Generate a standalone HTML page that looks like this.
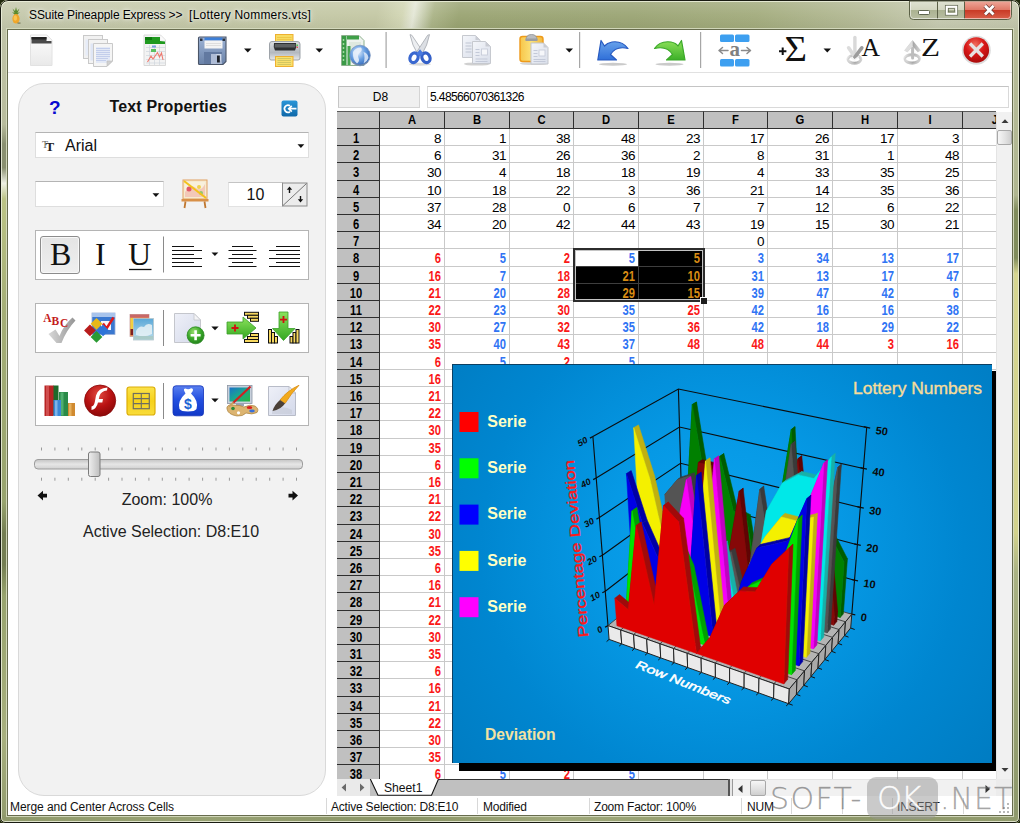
<!DOCTYPE html>
<html lang="en"><head><meta charset="utf-8"><title>SSuite Pineapple Express</title>
<style>
html,body{margin:0;padding:0}
body{width:1020px;height:823px;overflow:hidden;background:#20280e;position:relative;font-family:"Liberation Sans",sans-serif;font-size:12px;color:#000}
div,span{box-sizing:border-box}
.abs{position:absolute}
#win{position:absolute;left:0;top:0;width:1020px;height:823px;border-radius:8px 8px 5px 5px;background:#a0ab78;overflow:hidden}
#win .tb{position:absolute;left:0;top:0;width:1020px;height:30px;background:linear-gradient(100deg,#c4c8ab 0,#c3c7a3 37%,#d2d6b4 39.5%,#e4e7d6 40.6%,#aab386 42.5%,#99a371 45%,#9aa473 62%,#a2ab7c 74%,#b3b994 84%,#c6cab0 92%,#c2c6ab 100%)}
#win .tbsh{position:absolute;left:0;top:0;width:1020px;height:30px;background:linear-gradient(180deg,rgba(255,255,255,.18) 0,rgba(255,255,255,.05) 50%,rgba(0,0,0,.04) 100%)}
#win .edge{position:absolute;left:0;top:0;width:1020px;height:823px;border:1px solid #191b12;border-radius:8px 8px 5px 5px;box-shadow:inset 0 0 0 1px rgba(236,240,220,.85)}
#client{position:absolute;left:8px;top:30px;width:1004px;height:785px;background:#fff;box-shadow:0 0 0 1px #676c4e,0 0 0 2px rgba(214,219,192,.9)}
#title{position:absolute;left:29px;top:8px;font-size:12px;line-height:14px;white-space:pre;color:#000;text-shadow:0 0 6px rgba(255,255,255,.9),0 0 3px rgba(255,255,255,.8)}
/* grid */
#grid{position:absolute;left:0;top:0;width:1020px;height:823px}
#gridbg{position:absolute;left:337px;top:111px;width:675px;height:668px;background:#fff;overflow:hidden}
.ch{position:absolute;top:111px;height:18px;background:#c0c0c0;border-top:1px solid #5a5a5a;border-right:1px solid #2e2e2e;border-bottom:1px solid #2e2e2e;font:bold 12.500px/15px "Liberation Sans",sans-serif;text-align:center;overflow:hidden}
.ch span{display:block;position:relative;top:1px;transform:scaleX(.9)}
.rh{position:absolute;left:337px;width:43px;background:#c0c0c0;border-right:1px solid #2e2e2e;border-bottom:1px solid #2e2e2e;font:bold 14px/16px "Liberation Sans",sans-serif;text-align:center;overflow:hidden}
.rh span{display:block;position:relative;top:1px;left:-2px;transform:scaleX(.8)}
.hl{position:absolute;left:380px;width:616px;height:1px;background:#c9c9c9}
.vl{position:absolute;top:129px;width:1px;height:650px;background:#c9c9c9}
.c{position:absolute;text-align:right;padding-right:3px;padding-top:1px;white-space:nowrap;overflow:hidden}
.c.n{font:13.500px/17px "Liberation Sans",sans-serif;color:#000;letter-spacing:-.45px}
.c.b{font:bold 14px/17px "Liberation Sans",sans-serif;transform:scaleX(.8);transform-origin:calc(100% - 3px) 50%}
.rd{color:#fa1818}.bl{color:#3074f4}.o{color:#d88c14}
.selblk{position:absolute;background:#000;border:2px solid #2c2c2c;box-shadow:inset 0 0 0 1px #c4c4c4}
.selgl{position:absolute;background:#3e3e3e}
.actcell{position:absolute;background:#fff}
.selh{position:absolute;width:7px;height:7px;background:#1c1c1c;border-top:1px solid #fff;border-left:1px solid #fff}
/* misc */
.namebox{position:absolute;left:338px;top:86px;width:82px;height:22px;background:#f0f0f0;border:1px solid #d4d4d4;border-top-color:#bdbdbd;border-left-color:#c6c6c6;font:12px/20px "Liberation Sans",sans-serif;text-align:center;padding-left:3px}
.fbar{position:absolute;left:427px;top:86px;width:582px;height:22px;background:#fff;border:1px solid #d9d9d9;border-top-color:#c4c4c4;font:12px/20px "Liberation Sans",sans-serif;padding-left:2px;letter-spacing:-.6px}
.vsb{position:absolute;left:996px;top:112px;width:16px;height:667px;background:#f1f1f1;border-left:1px solid #e4e4e4}
.vthumb{position:absolute;left:0;top:18px;width:15px;height:15px;border:1px solid #a8a8a8;border-radius:2px;background:linear-gradient(90deg,#f6f6f6,#e2e2e2 55%,#cfcfcf)}
.tabbar{position:absolute;left:337px;top:779px;width:396px;height:17px;background:#c0c0c0;overflow:hidden}
.tabnav{position:absolute;left:0;top:0;width:33px;height:17px;background:#eaeaea}
.tabsplit{position:absolute;left:391px;top:0;width:5px;height:17px;background:#e6e6e6;border-left:2px solid #555;border-right:1px solid #999}
.hsb{position:absolute;left:733px;top:779px;width:263px;height:17px;background:#f1f1f1;border-top:1px solid #e4e4e4}
.hthumb{position:absolute;left:17px;top:0;width:16px;height:16px;border:1px solid #a8a8a8;border-radius:2px;background:linear-gradient(180deg,#f6f6f6,#e2e2e2 55%,#cfcfcf)}
.sbcorner{position:absolute;left:996px;top:779px;width:16px;height:17px;background:#ececec}
.status{position:absolute;left:8px;top:796px;width:1004px;height:19px;background:#fff}
.status .st{position:absolute;top:4px;font:12px/14px "Liberation Sans",sans-serif;white-space:nowrap;letter-spacing:-.2px;color:#111}
.status .st.w{letter-spacing:-.07px}
.status i{position:absolute;top:2px;width:1px;height:16px;background:#d8d8d8}
.wm{position:absolute;left:770px;top:777px;width:250px;height:44px;font-family:"DejaVu Sans","Liberation Sans",sans-serif;font-weight:200;white-space:nowrap}
.wm span{position:absolute;font-size:30px;line-height:36px;top:4px}
.wm .w1{left:0;color:rgba(105,105,105,.6);letter-spacing:1.400px;-webkit-text-stroke:.3px rgba(105,105,105,.5)}
.wm .w2{left:97px;top:0;width:71px;height:42px;border-radius:9px;background:rgba(150,150,150,.5);color:rgba(255,255,255,.95);text-align:left;padding-left:10px;letter-spacing:-1.500px;line-height:43px;font-size:32px;-webkit-text-stroke:.4px rgba(255,255,255,.8)}
.wm .w3{left:170px;color:rgba(105,105,105,.55);letter-spacing:1px;-webkit-text-stroke:.3px rgba(105,105,105,.5)}
/* chart */
.chshadow{position:absolute;left:459px;top:371px;width:537px;height:400px;background:#000}
/* panel */
#panel{position:absolute;left:18px;top:83px;width:308px;height:713px;background:#f2f2f2;border:1px solid #d9d9d9;border-radius:26px}
#panel>*{position:absolute}
#panel>div,#panel>svg{margin-left:-19px;margin-top:-84px}
.pq{left:49px;top:97px;font:bold 19px/22px "Liberation Sans",sans-serif;color:#0808d0}
.ptitle{left:109.500px;top:96px;width:120px;font:bold 16px/22px "Liberation Sans",sans-serif;color:#111;white-space:nowrap;letter-spacing:.15px}
.combo{background:#fff;border:1px solid #dedede;border-top-color:#b4b4b4}
.fname{position:absolute;left:29px;top:3px;font:16px/20px "Liberation Sans",sans-serif;color:#111}
.sizebox{left:228px;top:182px;width:55px;height:25px;background:#fff;border:1px solid #e2e2e2;border-top-color:#c4c4c4;font:16px/23px "Liberation Sans",sans-serif;text-align:center;color:#111}
.tbox{left:35px;width:274px;height:50px;background:#fff;border:1px solid #b4b4b4}
.bbtn{left:40px;top:236px;width:40px;height:38px;border:1px solid #8c8c8c;border-radius:3px;background:linear-gradient(180deg,#e4e4e4,#efefef);box-shadow:inset 0 0 0 1px #f8f8f8}
.pB,.pI,.pU{font:32px/36px "Liberation Serif",serif;color:#111;top:236px}
.pB{left:50px}
.pI{left:95px}
.pU{left:128px}
.zoomlbl{left:67px;top:489.500px;width:200px;text-align:center;font:16px/20px "Liberation Sans",sans-serif;color:#222}
.actsel{left:67px;top:522px;width:208px;text-align:center;font:16px/20px "Liberation Sans",sans-serif;color:#222;white-space:nowrap}
/* frame sides */
.lside{position:absolute;left:0;top:30px;width:8px;height:786px;background:linear-gradient(180deg,#c0c4a8 0,#b8bc9c 12%,#8a9070 14.500%,#8a9070 17.500%,#eef0e4 19.500%,#bcc486 21.500%,#a4ae76 36%,#98a46e 60%,#747e52 64%,#747e52 68%,#98a46e 72%,#a8b07e 90%,#929c6e 100%)}
.rside{position:absolute;left:1012px;top:30px;width:8px;height:786px;background:linear-gradient(180deg,#b8bd9a 0,#b0b690 21%,#818c5c 23%,#818c5c 29%,#d6d690 31%,#d2d28c 64%,#aab284 69%,#98a272 85%,#8e986c 100%)}
.bside{position:absolute;left:0;top:815px;width:1020px;height:8px;background:linear-gradient(90deg,#8f996b,#98a274 20%,#8a9466 40%,#a0a97c 55%,#8c9668 75%,#929c6e)}

</style></head>
<body>
<div id="win">
<div class="tb"></div><div class="tbsh"></div>
<div class="lside"></div><div class="rside"></div><div class="bside"></div>
<div class="edge"></div>
<svg class="abs" style="left:11px;top:7px" width="10" height="17" viewBox="0 0 10 17"><path d="M5 0 L4 4 L1.5 1.5 L3.5 6 L1 5 L4 8 L6 8 L9 5 L6.5 6 L8.5 1.500 L6 4 Z" fill="#5c8a2c"/><ellipse cx="5" cy="11.800" rx="3.600" ry="4.800" fill="#f0a62a"/><ellipse cx="4.300" cy="11" rx="1.800" ry="2.800" fill="#f8c552"/><rect x="6.500" y="15.500" width="3" height="1.200" fill="#7a7a58"/></svg>
<div id="title"><span style="letter-spacing:-.1px">SSuite Pineapple Express &gt;&gt;</span>  <span style="letter-spacing:.22px">[Lottery Nommers.vts]</span></div>
<svg id="capbtns" class="abs" style="left:905px;top:0" width="112" height="24" viewBox="905 0 112 24">
<defs>
<linearGradient id="cbG" x1="0" y1="0" x2="0" y2="1"><stop offset="0" stop-color="#dfe2d2"/><stop offset=".48" stop-color="#d2d6c0"/><stop offset=".5" stop-color="#abb291"/><stop offset="1" stop-color="#b9bfa3"/></linearGradient>
<linearGradient id="cbR" x1="0" y1="0" x2="0" y2="1"><stop offset="0" stop-color="#eda597"/><stop offset=".46" stop-color="#e07a68"/><stop offset=".5" stop-color="#c93a26"/><stop offset="1" stop-color="#d9604a"/></linearGradient>
</defs>
<path d="M909.500 1 L1011.500 1 L1011.500 15.500 Q1011.500 19.500 1007.500 19.500 L913.500 19.500 Q909.500 19.500 909.500 15.500 Z" fill="url(#cbG)" stroke="#5b6046" stroke-width="1"/>
<path d="M964.500 1.500 L1011 1.500 L1011 15.500 Q1011 19 1007.500 19 L964.500 19 Z" fill="url(#cbR)"/>
<path d="M937.500 1.500 V19 M964.500 1.500 V19" stroke="#5b6046" stroke-width="1"/>
<path d="M910.500 2 V15.500 Q910.500 18.500 913.500 18.500 H1007.500 Q1010.500 18.500 1010.500 15.500 V2" fill="none" stroke="rgba(255,255,255,.55)" stroke-width="1"/>
<rect x="918.500" y="10.500" width="11" height="4" rx="1" fill="#fff" stroke="#5f6650" stroke-width="1"/>
<rect x="946.500" y="6.500" width="10" height="7.500" fill="none" stroke="#fff" stroke-width="2.200"/>
<rect x="945.300" y="5.300" width="12.400" height="9.900" fill="none" stroke="#5f6650" stroke-width=".7"/>
<rect x="948.600" y="8.600" width="5.800" height="3.300" fill="none" stroke="#5f6650" stroke-width=".7"/>
<path d="M985 5.800 L993.500 14.500 M993.500 5.800 L985 14.500" stroke="#6a3a34" stroke-width="4.200"/>
<path d="M985 5.800 L993.500 14.500 M993.500 5.800 L985 14.500" stroke="#fff" stroke-width="2.800"/>
</svg>
<div id="client"></div>
</div>
<svg id="toolbar" class="abs" style="left:8px;top:30px" width="1004" height="44" viewBox="8 30 1004 44">
<defs>
<linearGradient id="gPage" x1="0" y1="0" x2="0" y2="1"><stop offset="0" stop-color="#fdfdfd"/><stop offset="1" stop-color="#e9e9e9"/></linearGradient>
<linearGradient id="gPageB" x1="0" y1="0" x2="1" y2="1"><stop offset="0" stop-color="#f4f6fa"/><stop offset="1" stop-color="#d9deea"/></linearGradient>
<linearGradient id="gFl" x1="0" y1="0" x2="0" y2="1"><stop offset="0" stop-color="#9db3d6"/><stop offset="1" stop-color="#6a82a8"/></linearGradient>
<linearGradient id="gPr" x1="0" y1="0" x2="0" y2="1"><stop offset="0" stop-color="#dcdfe2"/><stop offset=".6" stop-color="#b4b9bf"/><stop offset="1" stop-color="#e8eaec"/></linearGradient>
<linearGradient id="gClip" x1="0" y1="0" x2="1" y2="0"><stop offset="0" stop-color="#f7c64a"/><stop offset=".5" stop-color="#fbe27a"/><stop offset="1" stop-color="#f2b63a"/></linearGradient>
<radialGradient id="gGlobe" cx=".4" cy=".35" r=".7"><stop offset="0" stop-color="#e6f0fc"/><stop offset=".5" stop-color="#6aa0e2"/><stop offset="1" stop-color="#2c62b4"/></radialGradient>
<radialGradient id="gRed" cx=".45" cy=".3" r=".8"><stop offset="0" stop-color="#f07060"/><stop offset=".45" stop-color="#d81818"/><stop offset="1" stop-color="#9c0808"/></radialGradient>
<linearGradient id="gUndo" x1="0" y1="0" x2="0" y2="1"><stop offset="0" stop-color="#6aa4ec"/><stop offset="1" stop-color="#2f6fd8"/></linearGradient>
<linearGradient id="gRedo" x1="0" y1="0" x2="0" y2="1"><stop offset="0" stop-color="#8de05a"/><stop offset="1" stop-color="#3cb028"/></linearGradient>
<linearGradient id="gSil" x1="0" y1="0" x2="1" y2="0"><stop offset="0" stop-color="#e6e6e6"/><stop offset=".55" stop-color="#a8a8a8"/><stop offset="1" stop-color="#d8d8d8"/></linearGradient>
</defs>
<rect x="8" y="72" width="1004" height="1" fill="#e1e1e1"/>
<!-- 1 new -->
<g>
<path d="M30.500 35 L47 35 L52 40 L52 65.500 L30.500 65.500 Z" fill="url(#gPage)" stroke="#e2e2e2" stroke-width="1"/>
<path d="M31.500 37 L46.500 37 L46.500 41 L51.500 41 L51.500 43.500 L31.500 43.500 Z" fill="#4a4a4a"/>
<path d="M31.500 37 L46.500 37 L46.500 39.500 L31.500 39.500 Z" fill="#222"/>
<path d="M47 35.500 L47 40 L51.500 40 Z" fill="#f4f4f4"/>
</g>
<!-- 2 docs -->
<g stroke="#c9c9c9" stroke-width="1">
<rect x="83.500" y="35.500" width="19" height="23" fill="#f1f1f1"/>
<rect x="85.500" y="39.500" width="14" height="16" fill="#e6ecf8" stroke="none"/>
<rect x="88.500" y="39.500" width="19" height="24" fill="#f3f3f3"/>
<rect x="90.500" y="43.500" width="14" height="17" fill="#dfe6f5" stroke="none"/>
<path d="M93.500 43.500 L112.500 43.500 L112.500 61 L107 66.500 L93.500 66.500 Z" fill="#f5f5f5"/>
<rect x="96" y="47" width="14" height="16" fill="#e3e9f6" stroke="none"/>
<path d="M107 66 L107 61 L112.500 61 Z" fill="#d0d0d0" stroke="#bdbdbd" stroke-width=".6"/>
</g>
<g stroke="#b4c3e6" stroke-width=".7"><path d="M96 48.500h14M96 50.500h14M96 52.500h14M96 54.500h14M96 56.500h14M96 58.500h12M96 60.500h10"/></g>
<!-- 3 sheet chart -->
<g>
<path d="M144 35 L160.500 35 L165.500 40 L165.500 65.500 L144 65.500 Z" fill="#f3f3f3" stroke="#d9d9d9" stroke-width="1"/>
<path d="M145 37 L160 37 L160 41 L165 41.500 L165 44 L145 44 Z" fill="#1f9a1f"/>
<path d="M145 37 L152 37 L152 40 L145 40 Z" fill="#0d7a0d"/>
<path d="M160.500 35.500 L160.500 40 L165 40 Z" fill="#fafafa"/>
<g stroke="#cfd5dd" stroke-width=".7"><path d="M146 47.500h19M146 51.500h19M146 55.500h19M146 59.500h19M146 63h19M149.500 45v20M154.500 45v20M159.500 45v20"/></g>
<rect x="151" y="49" width="5" height="3" fill="#58c060"/><rect x="152" y="45.500" width="4" height="2" fill="#7aa0e0"/>
<path d="M147.500 62 L151 56 L153 59 L157.500 52.500 L159.500 57 L161.500 53 L163 60" fill="none" stroke="#ee7a70" stroke-width="1.100"/>
</g>
<!-- 4 floppy -->
<g>
<path d="M199.500 37 L226 37 L226 61.500 L223 64.500 L199.500 64.500 Q198.500 64.500 198.500 63.500 L198.500 38 Q198.500 37 199.500 37 Z" fill="url(#gFl)" stroke="#4a5568" stroke-width="1.100"/>
<rect x="204.500" y="37.500" width="18" height="3" fill="#3d7fd8"/>
<rect x="204.500" y="40.500" width="18" height="8" fill="#f4f4f4"/>
<path d="M206 43.500h15M206 45.500h15" stroke="#d4d4d4" stroke-width=".7"/>
<rect x="200" y="38.500" width="2.500" height="2.500" fill="#2b3340"/><rect x="222.500" y="38.500" width="2.500" height="2.500" fill="#2b3340"/>
<rect x="204" y="52" width="18" height="12" fill="#6279a0"/>
<rect x="211" y="54" width="10.500" height="10" fill="#cfd9ea"/>
<path d="M211 54 L216 54 L221.500 62 L221.500 64 L211 64 Z" fill="#aebcd6"/>
<rect x="217" y="55.500" width="2.800" height="7" fill="#1c2028"/>
</g>
<path d="M244 48.500 L251.500 48.500 L247.750 52.500 Z" fill="#111"/>
<!-- 5 printer -->
<g>
<rect x="275.500" y="34.500" width="17.500" height="9" fill="#f7dc62" stroke="#eeb030" stroke-width="1"/>
<path d="M277 37.500h14.500M277 39.500h14.500" stroke="#edc240" stroke-width=".8"/>
<path d="M269.500 44 Q269.500 41.500 272 41.500 L297 41.500 Q300 41.500 300 44 L300 58 Q300 60 298 60 L271 60 Q269.500 60 269.500 58 Z" fill="url(#gPr)" stroke="#9ea3a9" stroke-width="1"/>
<path d="M274 43 L296 43 Q297 47 295 50.500 L275 50.500 Q273 47 274 43 Z" fill="#2d2f31"/>
<path d="M275 44 L295.500 44 Q295.800 46 295 47.500 L274.600 47.500 Z" fill="#5d6062"/>
<rect x="296.500" y="44.500" width="1.500" height="1.500" fill="#4bd04b"/><rect x="296.500" y="46.500" width="1.500" height="1.500" fill="#e05050"/>
<rect x="275.500" y="56.500" width="17.500" height="10" fill="#f9e06c" stroke="#eeb030" stroke-width="1"/>
<path d="M277.500 58.500h13.500M277.500 60.500h13.500M277.500 62.500h13.500M277.500 64.500h13.500" stroke="#c8c060" stroke-width=".8"/>
</g>
<path d="M315.500 48.500 L323 48.500 L319.250 52.500 Z" fill="#111"/>
<!-- 6 globe doc -->
<g>
<path d="M341.500 35.500 L359 35.500 L364 40.500 L364 65.500 L341.500 65.500 Z" fill="#eef3ee" stroke="#8db08d" stroke-width="1"/>
<rect x="342" y="36" width="4.500" height="29" fill="#3a9a46"/>
<path d="M343.500 39v22" stroke="#9fd8a0" stroke-width="1.500" stroke-dasharray="2 2"/>
<rect x="347" y="36" width="12" height="3.500" fill="#3fa048"/>
<rect x="349" y="42" width="12" height="10" fill="#dfe9df"/>
<rect x="347.500" y="46" width="3" height="19" fill="#46a650"/>
<circle cx="360" cy="55.500" r="10.300" fill="url(#gGlobe)" stroke="#7f99c0" stroke-width=".8"/>
<path d="M353 52 Q356 47 361 47.500 Q363 50 360 52.500 Q357 55 358.500 58 Q360 61 357 63.500 Q352.500 60 353 52 Z" fill="#e8f0fb" opacity=".9"/>
<path d="M363.500 52 Q368 53 368.500 58 Q367 62 363.500 63.500 Q365.500 58 363.500 52 Z" fill="#dfeaf9" opacity=".85"/>
<path d="M352 62 Q360 68 368 62" stroke="#8a8f98" stroke-width="1.200" fill="none" opacity=".6"/>
</g>
<rect x="385.500" y="32" width="1.200" height="36" fill="#a6a6a6"/>
<!-- 7 scissors -->
<g>
<ellipse cx="420" cy="64.300" rx="11" ry="1.500" fill="#c9c9c9" opacity=".7"/>
<path d="M410 34.600 L411.800 35.200 L422.800 51.500 L418.500 55.500 Q411.800 45 410 34.600 Z" fill="#eceef1" stroke="#a4a8ae" stroke-width=".8" stroke-linejoin="round"/>
<path d="M429.500 34.600 L427.700 35.200 L417 51.500 L421.300 55.500 Q427.800 45 429.500 34.600 Z" fill="#dcdfe4" stroke="#a4a8ae" stroke-width=".8" stroke-linejoin="round"/>
<ellipse cx="414" cy="57.800" rx="3.900" ry="5" transform="rotate(24 414 57.800)" fill="none" stroke="#3a68d0" stroke-width="3.200"/>
<ellipse cx="426" cy="57.800" rx="3.900" ry="5" transform="rotate(-24 426 57.800)" fill="none" stroke="#3460c8" stroke-width="3.200"/>
<path d="M416.500 53.500 L420 49.200 L423.500 53.500 L420 57 Z" fill="#4878de"/>
</g>
<!-- 8 copy -->
<g>
<ellipse cx="477" cy="64" rx="13" ry="1.600" fill="#c4c4c4" opacity=".8"/>
<path d="M462.500 35.500 L475.500 35.500 L480 40 L480 57.500 L462.500 57.500 Z" fill="url(#gPageB)" stroke="#c6c9cf" stroke-width="1"/>
<path d="M475.500 35.500 L475.500 40 L480 40 Z" fill="#c9ccd4"/>
<path d="M465.500 43h6M465.500 46h6M465.500 49h6M465.500 52h6" stroke="#bfc5d2" stroke-width="1"/>
<path d="M472.500 41.500 L485.500 41.500 L490.500 46.500 L490.500 63.500 L472.500 63.500 Z" fill="url(#gPageB)" stroke="#c6c9cf" stroke-width="1"/>
<path d="M485.500 41.500 L485.500 46.500 L490.500 46.500 Z" fill="#c9ccd4"/>
<rect x="481.500" y="49" width="6" height="6" fill="#f6f7fa" stroke="#c4c9d6" stroke-width=".8"/>
<path d="M475.500 49.500h4M475.500 52.500h4M475.500 55.500h4M475.500 59h12M475.500 61.500h12" stroke="#c3c9d8" stroke-width="1"/>
</g>
<!-- 9 paste -->
<g>
<ellipse cx="534" cy="63.500" rx="14" ry="1.600" fill="#c4c4c4" opacity=".7"/>
<rect x="520" y="36.500" width="23" height="25" rx="2.500" fill="url(#gClip)" stroke="#ee9a1a" stroke-width="1.400"/>
<path d="M526 40 Q526 34.500 531.500 34.500 Q537 34.500 537 40 Z" fill="#b9bcc0" stroke="#8d9096" stroke-width=".8"/>
<rect x="525.500" y="38.500" width="12" height="2.500" fill="#9a9da2"/>
<path d="M531 43 L543.500 43 L548 47.500 L548 64 L531 64 Z" fill="url(#gPageB)" stroke="#c3c6cc" stroke-width="1"/>
<path d="M543.500 43 L543.500 47.500 L548 47.500 Z" fill="#c9ccd4"/>
<rect x="539" y="50" width="6" height="6" fill="#f6f7fa" stroke="#c4c9d6" stroke-width=".8"/>
<path d="M533.500 50.500h4M533.500 53.500h4M533.500 56.500h4M533.500 59.500h12M533.500 61.500h12" stroke="#c3c9d8" stroke-width="1"/>
</g>
<path d="M565.500 48.500 L573 48.500 L569.250 52.500 Z" fill="#111"/>
<rect x="579" y="32" width="1.200" height="36" fill="#a6a6a6"/>
<!-- 10 undo -->
<g>
<ellipse cx="613" cy="64.300" rx="14" ry="1.500" fill="#bdbdbd" opacity=".8"/>
<path d="M601 40.500 L597.800 60 L616.500 60 L610.500 54.500 Q616 45.500 628 48.500 Q622 40.500 612 42 Q607 43 604.500 46 Z" fill="url(#gUndo)" stroke="#2558c0" stroke-width="1.200" stroke-linejoin="round"/>
</g>
<!-- 11 redo -->
<g>
<ellipse cx="669.500" cy="64.300" rx="14" ry="1.500" fill="#bdbdbd" opacity=".8"/>
<path d="M681.500 40.500 L685 60 L666.500 60 L672.500 54.500 Q667 45.500 654.500 48.500 Q660 40.500 671 42 Q676 43 678 46 Z" fill="url(#gRedo)" stroke="#3aa828" stroke-width="1.200" stroke-linejoin="round"/>
</g>
<rect x="700" y="32" width="1.200" height="36" fill="#a6a6a6"/>
<!-- 12 merge -->
<g>
<rect x="720" y="34.500" width="14" height="7.500" rx="1.500" fill="#3d9ff0"/><rect x="735" y="34.500" width="14.500" height="7.500" rx="1.500" fill="#3d9ff0"/>
<rect x="720" y="59" width="14" height="7.500" rx="1.500" fill="#3d9ff0"/><rect x="735" y="59" width="14.500" height="7.500" rx="1.500" fill="#3d9ff0"/>
<text x="734.800" y="55.500" text-anchor="middle" font-family="Liberation Serif, serif" font-weight="bold" font-size="21" fill="#808080">a</text>
<path d="M719 50.500h9M719 50.500l3.500-3M719 50.500l3.500 3M750.500 50.500h-9M750.500 50.500l-3.500-3M750.500 50.500l-3.500 3" stroke="#8a8a8a" stroke-width="1.500" fill="none" stroke-linecap="round"/>
</g>
<!-- 13 sum -->
<text x="784.500" y="61.200" font-family="Liberation Serif, serif" font-size="35" fill="#111" textLength="22.500" lengthAdjust="spacingAndGlyphs">Σ</text>
<path d="M779 51.200h7.400M782.700 47.500v7.400" stroke="#111" stroke-width="2"/>
<path d="M823.500 48.500 L831 48.500 L827.250 52.500 Z" fill="#111"/>
<!-- 14 sort A -->
<g>
<ellipse cx="854.400" cy="59.300" rx="6.600" ry="3.900" fill="none" stroke="url(#gSil)" stroke-width="2.800"/>
<ellipse cx="854.400" cy="60.300" rx="6.600" ry="3.900" fill="none" stroke="#c8c8c8" stroke-width="1.200" opacity=".7"/>
<path d="M854.900 37.500 V56" stroke="#d9d9d9" stroke-width="3.400" stroke-linecap="round"/>
<path d="M848.600 47.800 L854.900 57" stroke="#dcdcdc" stroke-width="3.600" stroke-linecap="round"/>
<path d="M861.800 47.800 L854.900 57" stroke="#9c9c9c" stroke-width="3.600" stroke-linecap="round"/>
<path d="M850.500 57.500 L854.500 60 L859 56.500" stroke="#f4f4f4" stroke-width="1.400" fill="none"/>
<text x="861.500" y="55.500" font-family="Liberation Serif, serif" font-size="25" fill="#111" textLength="18.500" lengthAdjust="spacingAndGlyphs">A</text>
</g>
<!-- 15 sort Z -->
<g>
<ellipse cx="912.100" cy="58.800" rx="7.400" ry="4.200" fill="none" stroke="url(#gSil)" stroke-width="2.800"/>
<ellipse cx="912.100" cy="59.800" rx="7.400" ry="4.200" fill="none" stroke="#c8c8c8" stroke-width="1.200" opacity=".7"/>
<path d="M912.600 48 V58" stroke="#bdbdbd" stroke-width="3" stroke-linecap="round"/>
<path d="M912.600 40.200 L921 50.600 L917.800 52.200 L912.600 46.200 L907.400 52.200 L904.200 50.600 Z" fill="url(#gSil)"/>
<path d="M912.600 40.200 L904.200 50.600 L907.400 52.200 L912.600 46.200 Z" fill="#dedede"/>
<text x="921" y="56.300" font-family="Liberation Serif, serif" font-size="25.500" fill="#111" textLength="19" lengthAdjust="spacingAndGlyphs">Z</text>
</g>
<!-- 16 close -->
<g>
<circle cx="976.300" cy="50.300" r="14.500" fill="#dcdcdc"/>
<circle cx="976.300" cy="50" r="12.800" fill="url(#gRed)"/>
<path d="M970 43.500 L982.800 56.500 M982.800 43.500 L970 56.500" stroke="#e6e2e2" stroke-width="3.300" stroke-linecap="butt"/>
</g>
</svg>
<div id="panel">
<div class="pq">?</div>
<div class="ptitle">Text Properties</div>
<div class="combo" style="left:35px;top:132px;width:274px;height:26px"><span class="fname">Arial</span></div>
<div class="combo" style="left:35px;top:181px;width:129px;height:26px"></div>
<div class="sizebox">10</div>
<div class="tbox" style="top:230px"></div>
<div class="bbtn"></div>
<div class="tbox" style="top:303px"></div>
<div class="tbox" style="top:376px"></div>
<div class="pB">B</div><div class="pI">I</div><div class="pU">U</div>
<div class="zoomlbl">Zoom: 100%</div>
<div class="actsel">Active Selection: D8:E10</div>
<svg id="picons" class="abs" style="left:19px;top:84px" width="307" height="460" viewBox="19 84 307 460">
<defs>
<linearGradient id="pgBlue" x1="0" y1="0" x2="0" y2="1"><stop offset="0" stop-color="#2a96d8"/><stop offset="1" stop-color="#0f68a8"/></linearGradient>
<linearGradient id="pgGreen" x1="0" y1="0" x2="0" y2="1"><stop offset="0" stop-color="#8be25c"/><stop offset="1" stop-color="#35a822"/></linearGradient>
<radialGradient id="pgGreenC" cx=".4" cy=".3" r=".8"><stop offset="0" stop-color="#9ae070"/><stop offset=".5" stop-color="#3aa82a"/><stop offset="1" stop-color="#1f7a18"/></radialGradient>
<radialGradient id="pgFlash" cx=".45" cy=".3" r=".8"><stop offset="0" stop-color="#e04a40"/><stop offset=".5" stop-color="#b81212"/><stop offset="1" stop-color="#7c0606"/></radialGradient>
<linearGradient id="pgYel" x1="0" y1="0" x2="0" y2="1"><stop offset="0" stop-color="#fbe24a"/><stop offset=".5" stop-color="#f6d21c"/><stop offset="1" stop-color="#f9dc3a"/></linearGradient>
<linearGradient id="pgBag" x1="0" y1="0" x2="0" y2="1"><stop offset="0" stop-color="#5a80f0"/><stop offset=".45" stop-color="#2450e0"/><stop offset="1" stop-color="#1038c8"/></linearGradient>
<linearGradient id="pgScr" x1="0" y1="0" x2="1" y2="1"><stop offset="0" stop-color="#1a70c8"/><stop offset=".5" stop-color="#18a890"/><stop offset="1" stop-color="#28b838"/></linearGradient>
<linearGradient id="pgChk" x1="0" y1="0" x2="1" y2="0"><stop offset="0" stop-color="#d6d6d6"/><stop offset="1" stop-color="#8f8f8f"/></linearGradient>
<linearGradient id="pgSky" x1="0" y1="0" x2="0" y2="1"><stop offset="0" stop-color="#5aa8d8"/><stop offset="1" stop-color="#b8dcec"/></linearGradient>
<linearGradient id="pgTrack" x1="0" y1="0" x2="0" y2="1"><stop offset="0" stop-color="#c4c4c4"/><stop offset=".5" stop-color="#e6e6e6"/><stop offset="1" stop-color="#d0d0d0"/></linearGradient>
<linearGradient id="pgThumb" x1="0" y1="0" x2="1" y2="0"><stop offset="0" stop-color="#efefef"/><stop offset="1" stop-color="#bdbdbd"/></linearGradient>
<linearGradient id="pgPg" x1="0" y1="0" x2="1" y2="1"><stop offset="0" stop-color="#eef0f8"/><stop offset="1" stop-color="#d4d9ea"/></linearGradient>
</defs>
<!-- top-right blue icon -->
<rect x="281.500" y="100.500" width="16" height="16" rx="2" fill="url(#pgBlue)"/>
<path d="M290 105.700 A3.600 3.600 0 1 0 290 111.800" fill="none" stroke="#fff" stroke-width="1.700"/>
<path d="M288.500 108.700 H296.500 M291.800 105.800 L288.700 108.700 L291.800 111.600" fill="none" stroke="#fff" stroke-width="1.700"/>
<!-- TT icon -->
<text x="42" y="148" font-family="Liberation Serif, serif" font-size="10" fill="#666">T</text>
<text x="45.500" y="151" font-family="Liberation Serif, serif" font-weight="bold" font-size="13" fill="#222">T</text>
<!-- combo arrows -->
<path d="M297.500 144.300 L304.300 144.300 L300.900 148 Z" fill="#111"/>
<path d="M152.500 193.300 L159.300 193.300 L155.900 197 Z" fill="#111"/>
<!-- painting icon -->
<g>
<rect x="183" y="180" width="24" height="19" fill="#f6ead0" stroke="#e0a060" stroke-width="1"/>
<rect x="185" y="182" width="20" height="15" fill="#f8f0dc"/>
<path d="M185 192 Q190 183 196 188 Q201 192 205 184 L205 197 L185 197 Z" fill="#f3c8b8"/>
<circle cx="189" cy="189" r="2.500" fill="#e05868"/><circle cx="199" cy="187" r="2" fill="#f0d050"/><circle cx="201" cy="193" r="2" fill="#90c870"/>
<path d="M184 181 L206 198" stroke="#f2c21a" stroke-width="2"/>
<rect x="181.500" y="199" width="27" height="2.500" fill="#d89048"/>
<path d="M185.500 201.500 L184.500 208 M204.500 201.500 L205.500 208" stroke="#c07830" stroke-width="1.800"/>
</g>
<!-- spin button -->
<g>
<rect x="282.500" y="183" width="24.500" height="23" fill="#ececec" stroke="#8c8c8c" stroke-width="1"/>
<path d="M283 205.500 L306.500 183.500" stroke="#777" stroke-width="1"/>
<path d="M289.500 186.500 L286.800 189.800 L288.800 189.800 L288.800 193 L290.200 193 L290.200 189.800 L292.200 189.800 Z" fill="#111"/>
<path d="M300.500 202.500 L297.800 199.200 L299.800 199.200 L299.800 196 L301.200 196 L301.200 199.200 L303.200 199.200 Z" fill="#111"/>
</g>
<!-- B I U row: separator, align icons -->
<rect x="163" y="236.500" width="1" height="36" fill="#8a8a8a"/>
<g stroke="#111" stroke-width="1.100">
<path d="M172 246.500h22M172 250.500h30M172 254.500h22M172 258.500h30M172 262.500h22M172 266.500h30"/>
<path d="M232 246.500h21M228.500 250.500h28M232 254.500h21M228.500 258.500h28M232 262.500h21M228.500 266.500h28"/>
<path d="M276 246.500h24M269 250.500h31M276 254.500h24M269 258.500h31M276 262.500h24M269 266.500h31"/>
</g>
<path d="M211.500 252.500 L218.300 252.500 L214.900 256 Z" fill="#111"/>
<path d="M129 269.500 H151.500" stroke="#111" stroke-width="1.300"/>
<!-- row 2 icons -->
<g>
<path d="M48.500 334 L55.500 329.500 L59.500 336 Q64 324.500 72.500 317.500 L75.500 320.500 Q66.500 330 61.500 343 L56.500 343 Z" fill="url(#pgChk)" opacity=".95"/>
<g font-family="Liberation Serif, serif" font-weight="bold" font-size="11.500" fill="#c41a1a"><text x="43.300" y="321.500">A</text><text x="51.600" y="324.500">B</text><text x="60" y="327.200">C</text></g>
</g>
<g>
<rect x="92" y="313" width="23" height="21.500" fill="#3a78d0" stroke="#9ab0d8" stroke-width=".8"/>
<rect x="92" y="313" width="23" height="4" fill="#a8c4ec"/>
<rect x="101" y="321" width="10" height="9" fill="#f4f6fa"/>
<path d="M103 323.500 L106.500 328.500 L113.500 317.500" fill="none" stroke="#e01818" stroke-width="2.400"/>
<g transform="translate(96.500 330.400) rotate(45)">
<rect x="-8.800" y="-8.800" width="8.300" height="8.300" fill="#e8b81a"/>
<rect x=".5" y="-8.800" width="8.300" height="8.300" fill="#2e74d8"/>
<rect x="-8.800" y=".5" width="8.300" height="8.300" fill="#b81c1c"/>
<rect x=".5" y=".5" width="8.300" height="8.300" fill="#2a9a32"/>
</g>
</g>
<g>
<rect x="130" y="314.500" width="19" height="22" fill="#e88a50" stroke="#c8a0a0" stroke-width=".8"/>
<rect x="130" y="314.500" width="19" height="3" fill="#c86868"/>
<rect x="130.500" y="318" width="3" height="17" fill="#f0d040"/><rect x="130.500" y="329" width="3" height="6" fill="#802020"/>
<rect x="133.500" y="318.500" width="20" height="21.500" fill="url(#pgSky)" stroke="#b4c6cc" stroke-width=".8"/>
<path d="M136 331 Q139 325 144 327 Q147 322 152 325 L152 334 Q145 338 136 335 Z" fill="#e8f2f6" opacity=".85"/>
<rect x="134" y="336" width="19" height="3.500" fill="#a8c8c0" opacity=".8"/>
</g>
<rect x="163" y="310" width="1" height="36" fill="#8a8a8a"/>
<g>
<path d="M174.500 313.500 L194 313.500 L200.500 320 L200.500 342.500 L174.500 342.500 Z" fill="url(#pgPg)" stroke="#c4c6cc" stroke-width="1"/>
<path d="M194 313.500 L194 320 L200.500 320 Z" fill="#f4f4f6" stroke="#c4c6cc" stroke-width=".8"/>
<circle cx="195.600" cy="335.300" r="8.500" fill="url(#pgGreenC)" stroke="#2a8a20" stroke-width=".8"/>
<path d="M190.600 335.300h10M195.600 330.300v10" stroke="#fff" stroke-width="2.600"/>
</g>
<path d="M211.300 326.500 L218.700 326.500 L215 330.200 Z" fill="#111"/>
<g>
<g fill="#f6d860" stroke="#111" stroke-width="1"><rect x="244.500" y="312.300" width="14" height="3"/><rect x="247.500" y="315.300" width="11" height="3"/><rect x="250.500" y="318.300" width="8" height="3"/>
<rect x="250.500" y="333.500" width="8" height="3"/><rect x="247.500" y="336.500" width="11" height="3"/><rect x="244.500" y="339.500" width="14" height="3"/></g>
<path d="M227 322 L243 322 L243 317 L256 328 L243 339 L243 334 L227 334 Z" fill="url(#pgGreen)" stroke="#3aa02a" stroke-width=".8"/>
<path d="M231.500 328h7M235 324.500v7" stroke="#d01010" stroke-width="1.800"/>
</g>
<g>
<g fill="#f6d860" stroke="#111" stroke-width="1"><rect x="268.500" y="329.500" width="3" height="13.500"/><rect x="271.500" y="332.500" width="3" height="10.500"/><rect x="274.500" y="336.500" width="3" height="6.500"/>
<rect x="290" y="336.500" width="3" height="6.500"/><rect x="293" y="332.500" width="3" height="10.500"/><rect x="296" y="329.500" width="3" height="13.500"/></g>
<path d="M279 312 L288 312 L288 328.500 L295 328.500 L283.500 340.500 L272.500 328.500 L279 328.500 Z" fill="url(#pgGreen)" stroke="#3aa02a" stroke-width=".8"/>
<path d="M280 319.600h7M283.500 316.100v7" stroke="#d01010" stroke-width="1.800"/>
</g>
<!-- row 3 icons -->
<g>
<rect x="53" y="385.500" width="5.500" height="30" fill="#1e6a2a"/>
<rect x="44.500" y="385.500" width="9" height="30.500" fill="#b82424"/><rect x="46" y="386" width="3" height="30" fill="#e06a6a" opacity=".6"/>
<rect x="59" y="392" width="9" height="24" fill="#2a8a48"/><rect x="60.500" y="392.500" width="3" height="23" fill="#6ac888" opacity=".6"/>
<rect x="53.500" y="400" width="7.500" height="16" fill="#3a88d8"/><rect x="55" y="400.500" width="2.500" height="15.500" fill="#9ac8f0" opacity=".7"/>
<rect x="68" y="403" width="7" height="13" fill="#d08a30"/><rect x="69" y="403.500" width="2.500" height="12.500" fill="#f0c070" opacity=".7"/>
</g>
<g>
<circle cx="100.100" cy="400.600" r="15.600" fill="url(#pgFlash)" stroke="#8a0a0a" stroke-width=".8"/>
<path d="M107 390.500 Q101 391 99.500 396 L98.800 399 L103 399 L102.300 402.500 L98 402.500 Q96.500 409 91.500 410 L91.500 406.500 Q94 406 94.800 402 L96 395.500 Q98 388 107.500 387.500 Z" fill="#fff"/>
</g>
<g>
<rect x="127" y="387" width="28" height="28" rx="2.500" fill="url(#pgYel)" stroke="#dcae08" stroke-width="1.200"/>
<rect x="133.300" y="393.500" width="16" height="15.200" fill="none" stroke="#6e6e60" stroke-width="1.200"/>
<path d="M141.300 393.500v15.200M133.300 398.600h16M133.300 403.600h16" stroke="#6e6e60" stroke-width="1.100"/>
</g>
<rect x="163" y="383" width="1" height="36" fill="#8a8a8a"/>
<g>
<rect x="173" y="385.800" width="30.500" height="30" rx="3" fill="url(#pgBag)" stroke="#1030b8" stroke-width=".8"/>
<path d="M184.500 391.500 Q183 388.500 185.500 388.500 Q188.500 390 191 388.200 Q194 388.500 192.500 391.500 L191 393.500 Q199 401 196.500 409 Q195 411.500 188 411.500 Q181 411.500 179.500 409 Q177 401 185.500 393.500 Z" fill="#fff"/>
<text x="188" y="408.500" text-anchor="middle" font-family="Liberation Sans, sans-serif" font-weight="bold" font-size="14" fill="#1a62d4">$</text>
</g>
<path d="M211.300 398.500 L218.700 398.500 L215 402.200 Z" fill="#111"/>
<g>
<rect x="227.500" y="385.500" width="24.500" height="18" fill="#c8d0dc" stroke="#8a94a4" stroke-width=".8"/>
<rect x="229.500" y="387.500" width="20.500" height="14" fill="url(#pgScr)"/>
<rect x="236" y="403.500" width="8" height="2.500" fill="#9aa4b4"/>
<path d="M227 409 Q226 404.500 233 405 Q241 405 244 407 Q250 404 255 406 Q259.500 409 257 412.500 Q252 415 246 413 Q243 416.500 237 416 Q228 414.500 227 409 Z" fill="#dcb470" stroke="#a8803c" stroke-width=".7"/>
<circle cx="233" cy="408.500" r="1.800" fill="#2a8a3a"/><circle cx="238.500" cy="412.800" r="1.600" fill="#fff"/><ellipse cx="249.500" cy="407.500" rx="2.800" ry="1.600" fill="#d82020"/><ellipse cx="252" cy="411" rx="2.800" ry="1.400" fill="#3a70d8"/>
<path d="M250.500 386.500 L233 403" stroke="#d02020" stroke-width="2.200"/>
<path d="M233.500 402.500 L229 406.500" stroke="#c8a060" stroke-width="2"/>
</g>
<g>
<path d="M268.500 386.500 L289 386.500 L295.500 393 L295.500 415.500 L268.500 415.500 Z" fill="url(#pgPg)" stroke="#b8bcc8" stroke-width="1"/>
<path d="M289 386.500 L289 393 L295.500 393 Z" fill="#f6f6f8" stroke="#b8bcc8" stroke-width=".8"/>
<path d="M272 411 Q282 404 292 410 L292 414 L272 414 Z" fill="#c8ccd8" opacity=".7"/>
<path d="M299 385.300 Q291.500 393 285 403.500 L280 400 Q287.500 390.500 299 385.300 Z" fill="#f2aa1c" stroke="#d88c10" stroke-width=".8"/>
<path d="M285 403.500 Q281 409.500 272.500 411 Q274.500 404.500 280 400 Z" fill="#4a4038"/>
</g>
<!-- slider -->
<g fill="#9a9a9a">
<rect x="41.0" y="447.500" width="1" height="3"/><rect x="41.0" y="477.700" width="1" height="3"/><rect x="54.4" y="447.500" width="1" height="3"/><rect x="54.4" y="477.700" width="1" height="3"/><rect x="67.8" y="447.500" width="1" height="3"/><rect x="67.8" y="477.700" width="1" height="3"/><rect x="81.3" y="447.500" width="1" height="3"/><rect x="81.3" y="477.700" width="1" height="3"/><rect x="94.7" y="447.500" width="1" height="3"/><rect x="94.7" y="477.700" width="1" height="3"/><rect x="108.1" y="447.500" width="1" height="3"/><rect x="108.1" y="477.700" width="1" height="3"/><rect x="121.5" y="447.500" width="1" height="3"/><rect x="121.5" y="477.700" width="1" height="3"/><rect x="134.9" y="447.500" width="1" height="3"/><rect x="134.9" y="477.700" width="1" height="3"/><rect x="148.4" y="447.500" width="1" height="3"/><rect x="148.4" y="477.700" width="1" height="3"/><rect x="161.8" y="447.500" width="1" height="3"/><rect x="161.8" y="477.700" width="1" height="3"/><rect x="175.2" y="447.500" width="1" height="3"/><rect x="175.2" y="477.700" width="1" height="3"/><rect x="188.6" y="447.500" width="1" height="3"/><rect x="188.6" y="477.700" width="1" height="3"/><rect x="202.1" y="447.500" width="1" height="3"/><rect x="202.1" y="477.700" width="1" height="3"/><rect x="215.5" y="447.500" width="1" height="3"/><rect x="215.5" y="477.700" width="1" height="3"/><rect x="228.9" y="447.500" width="1" height="3"/><rect x="228.9" y="477.700" width="1" height="3"/><rect x="242.3" y="447.500" width="1" height="3"/><rect x="242.3" y="477.700" width="1" height="3"/><rect x="255.7" y="447.500" width="1" height="3"/><rect x="255.7" y="477.700" width="1" height="3"/><rect x="269.2" y="447.500" width="1" height="3"/><rect x="269.2" y="477.700" width="1" height="3"/><rect x="282.6" y="447.500" width="1" height="3"/><rect x="282.6" y="477.700" width="1" height="3"/><rect x="296.0" y="447.500" width="1" height="3"/><rect x="296.0" y="477.700" width="1" height="3"/>
</g>
<rect x="34.500" y="459.500" width="268" height="9.500" rx="3.500" fill="url(#pgTrack)" stroke="#9c9c9c" stroke-width="1"/>
<rect x="88.500" y="452" width="11.500" height="24.500" rx="2" fill="url(#pgThumb)" stroke="#7a7a7a" stroke-width="1"/>
<path d="M37.500 495.600 L43 490.800 L43 493.800 L47 493.800 L47 497.400 L43 497.400 L43 500.400 Z" fill="#111"/>
<path d="M298 495.600 L292.500 490.800 L292.500 493.800 L288.500 493.800 L288.500 497.400 L292.500 497.400 L292.500 500.400 Z" fill="#111"/>
</svg>
</div>
<div id="grid">
<div class="ch corner" style="left:337px;width:43px"></div>
<div class="ch" style="left:380px;width:65px"><span>A</span></div>
<div class="ch" style="left:445px;width:65px"><span>B</span></div>
<div class="ch" style="left:510px;width:64px"><span>C</span></div>
<div class="ch" style="left:574px;width:65px"><span>D</span></div>
<div class="ch" style="left:639px;width:65px"><span>E</span></div>
<div class="ch" style="left:704px;width:64px"><span>F</span></div>
<div class="ch" style="left:768px;width:65px"><span>G</span></div>
<div class="ch" style="left:833px;width:65px"><span>H</span></div>
<div class="ch" style="left:898px;width:65px"><span>I</span></div>
<div class="ch" style="left:963px;width:33px;border-right:0"><span style="left:12px;width:40px">J</span></div>
<div class="rh" style="top:129px;height:17px"><span>1</span></div>
<div class="hl" style="top:145px"></div>
<div class="rh" style="top:146px;height:17px"><span>2</span></div>
<div class="hl" style="top:162px"></div>
<div class="rh" style="top:163px;height:18px"><span>3</span></div>
<div class="hl" style="top:180px"></div>
<div class="rh" style="top:181px;height:17px"><span>4</span></div>
<div class="hl" style="top:197px"></div>
<div class="rh" style="top:198px;height:17px"><span>5</span></div>
<div class="hl" style="top:214px"></div>
<div class="rh" style="top:215px;height:17px"><span>6</span></div>
<div class="hl" style="top:231px"></div>
<div class="rh" style="top:232px;height:17px"><span>7</span></div>
<div class="hl" style="top:248px"></div>
<div class="rh" style="top:249px;height:18px"><span>8</span></div>
<div class="hl" style="top:266px"></div>
<div class="rh" style="top:267px;height:17px"><span>9</span></div>
<div class="hl" style="top:283px"></div>
<div class="rh" style="top:284px;height:17px"><span>10</span></div>
<div class="hl" style="top:300px"></div>
<div class="rh" style="top:301px;height:17px"><span>11</span></div>
<div class="hl" style="top:317px"></div>
<div class="rh" style="top:318px;height:17px"><span>12</span></div>
<div class="hl" style="top:334px"></div>
<div class="rh" style="top:335px;height:18px"><span>13</span></div>
<div class="hl" style="top:352px"></div>
<div class="rh" style="top:353px;height:17px"><span>14</span></div>
<div class="hl" style="top:369px"></div>
<div class="rh" style="top:370px;height:17px"><span>15</span></div>
<div class="hl" style="top:386px"></div>
<div class="rh" style="top:387px;height:17px"><span>16</span></div>
<div class="hl" style="top:403px"></div>
<div class="rh" style="top:404px;height:17px"><span>17</span></div>
<div class="hl" style="top:420px"></div>
<div class="rh" style="top:421px;height:18px"><span>18</span></div>
<div class="hl" style="top:438px"></div>
<div class="rh" style="top:439px;height:17px"><span>19</span></div>
<div class="hl" style="top:455px"></div>
<div class="rh" style="top:456px;height:17px"><span>20</span></div>
<div class="hl" style="top:472px"></div>
<div class="rh" style="top:473px;height:17px"><span>21</span></div>
<div class="hl" style="top:489px"></div>
<div class="rh" style="top:490px;height:17px"><span>22</span></div>
<div class="hl" style="top:506px"></div>
<div class="rh" style="top:507px;height:18px"><span>23</span></div>
<div class="hl" style="top:524px"></div>
<div class="rh" style="top:525px;height:17px"><span>24</span></div>
<div class="hl" style="top:541px"></div>
<div class="rh" style="top:542px;height:17px"><span>25</span></div>
<div class="hl" style="top:558px"></div>
<div class="rh" style="top:559px;height:17px"><span>26</span></div>
<div class="hl" style="top:575px"></div>
<div class="rh" style="top:576px;height:17px"><span>27</span></div>
<div class="hl" style="top:592px"></div>
<div class="rh" style="top:593px;height:18px"><span>28</span></div>
<div class="hl" style="top:610px"></div>
<div class="rh" style="top:611px;height:17px"><span>29</span></div>
<div class="hl" style="top:627px"></div>
<div class="rh" style="top:628px;height:17px"><span>30</span></div>
<div class="hl" style="top:644px"></div>
<div class="rh" style="top:645px;height:17px"><span>31</span></div>
<div class="hl" style="top:661px"></div>
<div class="rh" style="top:662px;height:17px"><span>32</span></div>
<div class="hl" style="top:678px"></div>
<div class="rh" style="top:679px;height:18px"><span>33</span></div>
<div class="hl" style="top:696px"></div>
<div class="rh" style="top:697px;height:17px"><span>34</span></div>
<div class="hl" style="top:713px"></div>
<div class="rh" style="top:714px;height:17px"><span>35</span></div>
<div class="hl" style="top:730px"></div>
<div class="rh" style="top:731px;height:17px"><span>36</span></div>
<div class="hl" style="top:747px"></div>
<div class="rh" style="top:748px;height:17px"><span>37</span></div>
<div class="hl" style="top:764px"></div>
<div class="rh" style="top:765px;height:18px"><span>38</span></div>
<div class="hl" style="top:782px"></div>
<div class="vl" style="left:444px"></div>
<div class="vl" style="left:509px"></div>
<div class="vl" style="left:573px"></div>
<div class="vl" style="left:638px"></div>
<div class="vl" style="left:703px"></div>
<div class="vl" style="left:767px"></div>
<div class="vl" style="left:832px"></div>
<div class="vl" style="left:897px"></div>
<div class="vl" style="left:962px"></div>
<div class="vl" style="left:1027px"></div>
<div class="selblk" style="left:573px;top:248px;width:132px;height:54px"></div>
<div class="selgl" style="left:576px;top:266px;width:126px;height:1px"></div>
<div class="selgl" style="left:576px;top:283px;width:126px;height:1px"></div>
<div class="selgl" style="left:638px;top:251px;width:1px;height:48px"></div>
<div class="actcell" style="left:576px;top:251px;width:62px;height:15px"></div>
<div class="selh" style="left:700px;top:297px"></div>
<div class="c n" style="left:380px;top:129px;width:64px;height:17px">8</div>
<div class="c n" style="left:445px;top:129px;width:64px;height:17px">1</div>
<div class="c n" style="left:510px;top:129px;width:63px;height:17px">38</div>
<div class="c n" style="left:574px;top:129px;width:64px;height:17px">48</div>
<div class="c n" style="left:639px;top:129px;width:64px;height:17px">23</div>
<div class="c n" style="left:704px;top:129px;width:63px;height:17px">17</div>
<div class="c n" style="left:768px;top:129px;width:64px;height:17px">26</div>
<div class="c n" style="left:833px;top:129px;width:64px;height:17px">17</div>
<div class="c n" style="left:898px;top:129px;width:64px;height:17px">3</div>
<div class="c n" style="left:380px;top:146px;width:64px;height:17px">6</div>
<div class="c n" style="left:445px;top:146px;width:64px;height:17px">31</div>
<div class="c n" style="left:510px;top:146px;width:63px;height:17px">26</div>
<div class="c n" style="left:574px;top:146px;width:64px;height:17px">36</div>
<div class="c n" style="left:639px;top:146px;width:64px;height:17px">2</div>
<div class="c n" style="left:704px;top:146px;width:63px;height:17px">8</div>
<div class="c n" style="left:768px;top:146px;width:64px;height:17px">31</div>
<div class="c n" style="left:833px;top:146px;width:64px;height:17px">1</div>
<div class="c n" style="left:898px;top:146px;width:64px;height:17px">48</div>
<div class="c n" style="left:380px;top:163px;width:64px;height:18px">30</div>
<div class="c n" style="left:445px;top:163px;width:64px;height:18px">4</div>
<div class="c n" style="left:510px;top:163px;width:63px;height:18px">18</div>
<div class="c n" style="left:574px;top:163px;width:64px;height:18px">18</div>
<div class="c n" style="left:639px;top:163px;width:64px;height:18px">19</div>
<div class="c n" style="left:704px;top:163px;width:63px;height:18px">4</div>
<div class="c n" style="left:768px;top:163px;width:64px;height:18px">33</div>
<div class="c n" style="left:833px;top:163px;width:64px;height:18px">35</div>
<div class="c n" style="left:898px;top:163px;width:64px;height:18px">25</div>
<div class="c n" style="left:380px;top:181px;width:64px;height:17px">10</div>
<div class="c n" style="left:445px;top:181px;width:64px;height:17px">18</div>
<div class="c n" style="left:510px;top:181px;width:63px;height:17px">22</div>
<div class="c n" style="left:574px;top:181px;width:64px;height:17px">3</div>
<div class="c n" style="left:639px;top:181px;width:64px;height:17px">36</div>
<div class="c n" style="left:704px;top:181px;width:63px;height:17px">21</div>
<div class="c n" style="left:768px;top:181px;width:64px;height:17px">14</div>
<div class="c n" style="left:833px;top:181px;width:64px;height:17px">35</div>
<div class="c n" style="left:898px;top:181px;width:64px;height:17px">36</div>
<div class="c n" style="left:380px;top:198px;width:64px;height:17px">37</div>
<div class="c n" style="left:445px;top:198px;width:64px;height:17px">28</div>
<div class="c n" style="left:510px;top:198px;width:63px;height:17px">0</div>
<div class="c n" style="left:574px;top:198px;width:64px;height:17px">6</div>
<div class="c n" style="left:639px;top:198px;width:64px;height:17px">7</div>
<div class="c n" style="left:704px;top:198px;width:63px;height:17px">7</div>
<div class="c n" style="left:768px;top:198px;width:64px;height:17px">12</div>
<div class="c n" style="left:833px;top:198px;width:64px;height:17px">6</div>
<div class="c n" style="left:898px;top:198px;width:64px;height:17px">22</div>
<div class="c n" style="left:380px;top:215px;width:64px;height:17px">34</div>
<div class="c n" style="left:445px;top:215px;width:64px;height:17px">20</div>
<div class="c n" style="left:510px;top:215px;width:63px;height:17px">42</div>
<div class="c n" style="left:574px;top:215px;width:64px;height:17px">44</div>
<div class="c n" style="left:639px;top:215px;width:64px;height:17px">43</div>
<div class="c n" style="left:704px;top:215px;width:63px;height:17px">19</div>
<div class="c n" style="left:768px;top:215px;width:64px;height:17px">15</div>
<div class="c n" style="left:833px;top:215px;width:64px;height:17px">30</div>
<div class="c n" style="left:898px;top:215px;width:64px;height:17px">21</div>
<div class="c n" style="left:704px;top:232px;width:63px;height:17px">0</div>
<div class="c b rd" style="left:380px;top:249px;width:64px;height:18px">6</div>
<div class="c b bl" style="left:445px;top:249px;width:64px;height:18px">5</div>
<div class="c b rd" style="left:510px;top:249px;width:63px;height:18px">2</div>
<div class="c b bl" style="left:574px;top:249px;width:64px;height:18px">5</div>
<div class="c b o" style="left:639px;top:249px;width:64px;height:18px">5</div>
<div class="c b bl" style="left:704px;top:249px;width:63px;height:18px">3</div>
<div class="c b bl" style="left:768px;top:249px;width:64px;height:18px">34</div>
<div class="c b bl" style="left:833px;top:249px;width:64px;height:18px">13</div>
<div class="c b bl" style="left:898px;top:249px;width:64px;height:18px">17</div>
<div class="c b rd" style="left:380px;top:267px;width:64px;height:17px">16</div>
<div class="c b bl" style="left:445px;top:267px;width:64px;height:17px">7</div>
<div class="c b rd" style="left:510px;top:267px;width:63px;height:17px">18</div>
<div class="c b o" style="left:574px;top:267px;width:64px;height:17px">21</div>
<div class="c b o" style="left:639px;top:267px;width:64px;height:17px">10</div>
<div class="c b bl" style="left:704px;top:267px;width:63px;height:17px">31</div>
<div class="c b bl" style="left:768px;top:267px;width:64px;height:17px">13</div>
<div class="c b bl" style="left:833px;top:267px;width:64px;height:17px">17</div>
<div class="c b bl" style="left:898px;top:267px;width:64px;height:17px">47</div>
<div class="c b rd" style="left:380px;top:284px;width:64px;height:17px">21</div>
<div class="c b bl" style="left:445px;top:284px;width:64px;height:17px">20</div>
<div class="c b rd" style="left:510px;top:284px;width:63px;height:17px">28</div>
<div class="c b o" style="left:574px;top:284px;width:64px;height:17px">29</div>
<div class="c b o" style="left:639px;top:284px;width:64px;height:17px">15</div>
<div class="c b bl" style="left:704px;top:284px;width:63px;height:17px">39</div>
<div class="c b bl" style="left:768px;top:284px;width:64px;height:17px">47</div>
<div class="c b bl" style="left:833px;top:284px;width:64px;height:17px">42</div>
<div class="c b bl" style="left:898px;top:284px;width:64px;height:17px">6</div>
<div class="c b rd" style="left:380px;top:301px;width:64px;height:17px">22</div>
<div class="c b bl" style="left:445px;top:301px;width:64px;height:17px">23</div>
<div class="c b rd" style="left:510px;top:301px;width:63px;height:17px">30</div>
<div class="c b bl" style="left:574px;top:301px;width:64px;height:17px">35</div>
<div class="c b rd" style="left:639px;top:301px;width:64px;height:17px">25</div>
<div class="c b bl" style="left:704px;top:301px;width:63px;height:17px">42</div>
<div class="c b bl" style="left:768px;top:301px;width:64px;height:17px">16</div>
<div class="c b bl" style="left:833px;top:301px;width:64px;height:17px">16</div>
<div class="c b bl" style="left:898px;top:301px;width:64px;height:17px">38</div>
<div class="c b rd" style="left:380px;top:318px;width:64px;height:17px">30</div>
<div class="c b bl" style="left:445px;top:318px;width:64px;height:17px">27</div>
<div class="c b rd" style="left:510px;top:318px;width:63px;height:17px">32</div>
<div class="c b bl" style="left:574px;top:318px;width:64px;height:17px">35</div>
<div class="c b rd" style="left:639px;top:318px;width:64px;height:17px">36</div>
<div class="c b bl" style="left:704px;top:318px;width:63px;height:17px">42</div>
<div class="c b bl" style="left:768px;top:318px;width:64px;height:17px">18</div>
<div class="c b bl" style="left:833px;top:318px;width:64px;height:17px">29</div>
<div class="c b bl" style="left:898px;top:318px;width:64px;height:17px">22</div>
<div class="c b rd" style="left:380px;top:335px;width:64px;height:18px">35</div>
<div class="c b bl" style="left:445px;top:335px;width:64px;height:18px">40</div>
<div class="c b rd" style="left:510px;top:335px;width:63px;height:18px">43</div>
<div class="c b bl" style="left:574px;top:335px;width:64px;height:18px">37</div>
<div class="c b rd" style="left:639px;top:335px;width:64px;height:18px">48</div>
<div class="c b rd" style="left:704px;top:335px;width:63px;height:18px">48</div>
<div class="c b rd" style="left:768px;top:335px;width:64px;height:18px">44</div>
<div class="c b rd" style="left:833px;top:335px;width:64px;height:18px">3</div>
<div class="c b rd" style="left:898px;top:335px;width:64px;height:18px">16</div>
<div class="c b rd" style="left:380px;top:353px;width:64px;height:17px">6</div>
<div class="c b bl" style="left:445px;top:353px;width:64px;height:17px">5</div>
<div class="c b rd" style="left:510px;top:353px;width:63px;height:17px">2</div>
<div class="c b bl" style="left:574px;top:353px;width:64px;height:17px">5</div>
<div class="c b rd" style="left:380px;top:370px;width:64px;height:17px">16</div>
<div class="c b rd" style="left:380px;top:387px;width:64px;height:17px">21</div>
<div class="c b rd" style="left:380px;top:404px;width:64px;height:17px">22</div>
<div class="c b rd" style="left:380px;top:421px;width:64px;height:18px">30</div>
<div class="c b rd" style="left:380px;top:439px;width:64px;height:17px">35</div>
<div class="c b rd" style="left:380px;top:456px;width:64px;height:17px">6</div>
<div class="c b rd" style="left:380px;top:473px;width:64px;height:17px">16</div>
<div class="c b rd" style="left:380px;top:490px;width:64px;height:17px">21</div>
<div class="c b rd" style="left:380px;top:507px;width:64px;height:18px">22</div>
<div class="c b rd" style="left:380px;top:525px;width:64px;height:17px">30</div>
<div class="c b rd" style="left:380px;top:542px;width:64px;height:17px">35</div>
<div class="c b rd" style="left:380px;top:559px;width:64px;height:17px">6</div>
<div class="c b rd" style="left:380px;top:576px;width:64px;height:17px">16</div>
<div class="c b rd" style="left:380px;top:593px;width:64px;height:18px">21</div>
<div class="c b rd" style="left:380px;top:611px;width:64px;height:17px">22</div>
<div class="c b rd" style="left:380px;top:628px;width:64px;height:17px">30</div>
<div class="c b rd" style="left:380px;top:645px;width:64px;height:17px">35</div>
<div class="c b rd" style="left:380px;top:662px;width:64px;height:17px">6</div>
<div class="c b rd" style="left:380px;top:679px;width:64px;height:18px">16</div>
<div class="c b rd" style="left:380px;top:697px;width:64px;height:17px">21</div>
<div class="c b rd" style="left:380px;top:714px;width:64px;height:17px">22</div>
<div class="c b rd" style="left:380px;top:731px;width:64px;height:17px">30</div>
<div class="c b rd" style="left:380px;top:748px;width:64px;height:17px">35</div>
<div class="c b rd" style="left:380px;top:765px;width:64px;height:18px">6</div>
<div class="c b bl" style="left:445px;top:765px;width:64px;height:18px">5</div>
<div class="c b rd" style="left:510px;top:765px;width:63px;height:18px">2</div>
<div class="c b bl" style="left:574px;top:765px;width:64px;height:18px">5</div>
</div>
<div class="chshadow"></div>
<svg id="chart" class="abs" style="left:452px;top:364px" width="540" height="399" viewBox="452 364 540 399">
<defs><radialGradient id="cbg" gradientUnits="userSpaceOnUse" cx="722" cy="548" r="390"><stop offset="0" stop-color="#0ca4f0"/><stop offset=".3" stop-color="#0699e5"/><stop offset=".62" stop-color="#0086d0"/><stop offset="1" stop-color="#0078bc"/></radialGradient></defs>
<rect x="452" y="364" width="540" height="399" fill="url(#cbg)"/>
<path d="M452 364.500H992M452.500 364V763" stroke="#10304a" stroke-width="1" opacity=".8"/>
<path d="M605.3,591.2 L682.5,531.6 L854.5,580.3 M602.4,555.2 L681.6,498.2 L857.3,544.7 M599.4,517.5 L680.5,463.3 L860.3,507.5 M596.2,478.0 L679.5,427.0 L863.4,468.5 M592.9,436.5 L678.4,389.0 L866.7,427.5 M608.0,625.6 L592.9,436.5 M683.5,563.7 L678.4,389.0 M851.8,614.3 L866.7,427.5" fill="none" stroke="#0c0c0c" stroke-width="1.100"/>
<path d="M848.8,613.5 L855.3,614.9 M851.5,579.5 L858.0,580.9 M854.3,543.9 L860.8,545.3 M857.3,506.7 L863.8,508.1 M860.4,467.7 L866.9,469.1 M863.7,426.7 L870.2,428.1 M605.0,627.2 L608.0,625.6 M602.3,592.8 L605.3,591.2 M599.4,556.8 L602.4,555.2 M596.4,519.1 L599.4,517.5 M593.2,479.6 L596.2,478.0 M589.9,438.1 L592.9,436.5" fill="none" stroke="#0c0c0c" stroke-width="1.200"/>
<polygon points="608.0,625.6 789.3,689.0 851.8,614.3 683.5,563.7" fill="#b4b4b4"/>
<path d="M608.0,625.6 L683.5,563.7 M620.7,630.0 L695.4,567.3 M633.6,634.5 L707.5,570.9 M646.7,639.1 L719.7,574.6 M660.0,643.8 L732.1,578.3 M673.5,648.5 L744.7,582.1 M687.2,653.3 L757.4,586.0 M701.1,658.2 L770.3,589.8 M715.3,663.1 L783.4,593.8 M729.6,668.1 L796.7,597.8 M744.2,673.2 L810.2,601.8 M759.0,678.4 L823.9,605.9 M774.0,683.7 L837.7,610.1 M789.3,689.0 L851.8,614.3 M608.0,625.6 L789.3,689.0 M617.2,618.0 L797.0,679.8 M626.2,610.7 L804.5,670.9 M635.0,603.5 L811.8,662.2 M643.6,596.4 L818.9,653.7 M651.9,589.6 L825.8,645.4 M660.1,582.9 L832.5,637.3 M668.1,576.3 L839.1,629.5 M675.8,569.9 L845.5,621.8 M683.5,563.7 L851.8,614.3" fill="none" stroke="#3a3a3a" stroke-width=".9"/>
<g><polygon points="683.6,560.5 692.3,404.5 696.5,402.0 687.4,557.4" fill="#005c00" stroke="#005c00" stroke-width=".6"/><polygon points="692.3,404.5 707.0,493.2 710.9,490.3 696.5,402.0" fill="#005c00" stroke="#005c00" stroke-width=".6"/><polygon points="707.0,493.2 719.8,456.4 723.8,453.6 710.9,490.3" fill="#005c00" stroke="#005c00" stroke-width=".6"/><polygon points="719.8,456.4 733.3,510.7 737.1,507.7 723.8,453.6" fill="#005c00" stroke="#005c00" stroke-width=".6"/><polygon points="733.3,510.7 746.6,517.8 750.3,514.7 737.1,507.7" fill="#005c00" stroke="#005c00" stroke-width=".6"/><polygon points="746.6,517.8 758.8,592.9 762.3,589.4 750.3,514.7" fill="#005c00" stroke="#005c00" stroke-width=".6"/><polygon points="758.8,592.9 773.4,539.2 777.0,536.0 762.3,589.4" fill="#005c00" stroke="#005c00" stroke-width=".6"/><polygon points="773.4,539.2 791.3,429.5 795.0,426.7 777.0,536.0" fill="#005c00" stroke="#005c00" stroke-width=".6"/><polygon points="791.3,429.5 799.5,584.9 802.8,581.5 795.0,426.7" fill="#005c00" stroke="#005c00" stroke-width=".6"/><polygon points="799.5,584.9 819.6,472.1 823.1,469.1 802.8,581.5" fill="#005c00" stroke="#005c00" stroke-width=".6"/><polygon points="819.6,472.1 830.9,536.5 834.3,533.2 823.1,469.1" fill="#005c00" stroke="#005c00" stroke-width=".6"/><polygon points="830.9,536.5 844.1,562.2 847.4,558.7 834.3,533.2" fill="#005c00" stroke="#005c00" stroke-width=".6"/><polygon points="840.1,617.6 843.3,613.9 847.4,558.7 844.1,562.2" fill="#005c00" stroke="#005c00" stroke-width=".6"/><polygon points="683.9,570.1 683.6,560.5 692.3,404.5 707.0,493.2 719.8,456.4 733.3,510.7 746.6,517.8 758.8,592.9 773.4,539.2 791.3,429.5 799.5,584.9 819.6,472.1 830.9,536.5 844.1,562.2 840.1,617.6" fill="#008000" stroke="#008000" stroke-width=".5"/></g>
<g><polygon points="674.3,520.2 688.3,577.0 692.1,573.8 678.3,517.2" fill="#600404" stroke="#600404" stroke-width=".6"/><polygon points="688.3,577.0 698.4,462.5 702.5,459.7 692.1,573.8" fill="#600404" stroke="#600404" stroke-width=".6"/><polygon points="698.4,462.5 711.8,465.8 715.9,462.9 702.5,459.7" fill="#600404" stroke="#600404" stroke-width=".6"/><polygon points="711.8,465.8 725.7,572.1 729.5,568.7 715.9,462.9" fill="#600404" stroke="#600404" stroke-width=".6"/><polygon points="725.7,572.1 739.2,491.3 743.1,488.2 729.5,568.7" fill="#600404" stroke="#600404" stroke-width=".6"/><polygon points="739.2,491.3 751.6,599.8 755.2,596.3 743.1,488.2" fill="#600404" stroke="#600404" stroke-width=".6"/><polygon points="751.6,599.8 765.8,559.8 769.5,556.5 755.2,596.3" fill="#600404" stroke="#600404" stroke-width=".6"/><polygon points="765.8,559.8 780.0,549.7 783.6,546.3 769.5,556.5" fill="#600404" stroke="#600404" stroke-width=".6"/><polygon points="780.0,549.7 798.0,458.7 801.7,455.8 783.6,546.3" fill="#600404" stroke="#600404" stroke-width=".6"/><polygon points="798.0,458.7 808.3,561.2 811.8,557.7 801.7,455.8" fill="#600404" stroke="#600404" stroke-width=".6"/><polygon points="808.3,561.2 825.6,517.0 829.1,513.7 811.8,557.7" fill="#600404" stroke="#600404" stroke-width=".6"/><polygon points="825.6,517.0 834.4,615.0 837.6,611.2 829.1,513.7" fill="#600404" stroke="#600404" stroke-width=".6"/><polygon points="833.7,625.2 836.9,621.4 837.6,611.2 834.4,615.0" fill="#600404" stroke="#600404" stroke-width=".6"/><polygon points="676.2,576.5 674.3,520.2 688.3,577.0 698.4,462.5 711.8,465.8 725.7,572.1 739.2,491.3 751.6,599.8 765.8,559.8 780.0,549.7 798.0,458.7 808.3,561.2 825.6,517.0 834.4,615.0 833.7,625.2" fill="#860808" stroke="#860808" stroke-width=".5"/></g>
<g><polygon points="664.8,494.6 677.2,479.8 681.4,476.9 669.0,491.7" fill="#3a3a3a" stroke="#3a3a3a" stroke-width=".6"/><polygon points="677.2,479.8 690.2,475.7 694.4,472.8 681.4,476.9" fill="#3a3a3a" stroke="#3a3a3a" stroke-width=".6"/><polygon points="690.2,475.7 704.8,547.7 708.7,544.4 694.4,472.8" fill="#3a3a3a" stroke="#3a3a3a" stroke-width=".6"/><polygon points="704.8,547.7 718.0,558.4 721.9,555.1 708.7,544.4" fill="#3a3a3a" stroke="#3a3a3a" stroke-width=".6"/><polygon points="718.0,558.4 731.3,551.8 735.1,548.5 721.9,555.1" fill="#3a3a3a" stroke="#3a3a3a" stroke-width=".6"/><polygon points="731.3,551.8 744.3,606.9 748.0,603.3 735.1,548.5" fill="#3a3a3a" stroke="#3a3a3a" stroke-width=".6"/><polygon points="744.3,606.9 759.8,489.4 763.7,486.2 748.0,603.3" fill="#3a3a3a" stroke="#3a3a3a" stroke-width=".6"/><polygon points="759.8,489.4 772.3,570.7 776.0,567.2 763.7,486.2" fill="#3a3a3a" stroke="#3a3a3a" stroke-width=".6"/><polygon points="772.3,570.7 791.2,444.3 795.0,441.3 776.0,567.2" fill="#3a3a3a" stroke="#3a3a3a" stroke-width=".6"/><polygon points="791.2,444.3 801.2,568.2 804.8,564.7 795.0,441.3" fill="#3a3a3a" stroke="#3a3a3a" stroke-width=".6"/><polygon points="801.2,568.2 816.3,565.1 819.8,561.5 804.8,564.7" fill="#3a3a3a" stroke="#3a3a3a" stroke-width=".6"/><polygon points="816.3,565.1 837.8,467.4 841.4,464.2 819.8,561.5" fill="#3a3a3a" stroke="#3a3a3a" stroke-width=".6"/><polygon points="827.1,632.9 830.4,629.0 841.4,464.2 837.8,467.4" fill="#3a3a3a" stroke="#3a3a3a" stroke-width=".6"/><polygon points="668.3,583.0 664.8,494.6 677.2,479.8 690.2,475.7 704.8,547.7 718.0,558.4 731.3,551.8 744.3,606.9 759.8,489.4 772.3,570.7 791.2,444.3 801.2,568.2 816.3,565.1 837.8,467.4 827.1,632.9" fill="#545454" stroke="#545454" stroke-width=".5"/></g>
<g><polygon points="657.7,532.6 671.6,567.2 675.7,563.8 661.9,529.4" fill="#18b0a8" stroke="#18b0a8" stroke-width=".6"/><polygon points="671.6,567.2 684.7,584.5 688.7,581.0 675.7,563.8" fill="#18b0a8" stroke="#18b0a8" stroke-width=".6"/><polygon points="684.7,584.5 696.2,529.5 700.4,526.3 688.7,581.0" fill="#18b0a8" stroke="#18b0a8" stroke-width=".6"/><polygon points="696.2,529.5 710.3,582.4 714.2,578.9 700.4,526.3" fill="#18b0a8" stroke="#18b0a8" stroke-width=".6"/><polygon points="710.3,582.4 723.4,544.3 727.3,541.0 714.2,578.9" fill="#18b0a8" stroke="#18b0a8" stroke-width=".6"/><polygon points="723.4,544.3 736.8,614.2 740.6,610.5 727.3,541.0" fill="#18b0a8" stroke="#18b0a8" stroke-width=".6"/><polygon points="736.8,614.2 750.4,608.4 754.1,604.7 740.6,610.5" fill="#18b0a8" stroke="#18b0a8" stroke-width=".6"/><polygon points="750.4,608.4 766.4,511.1 770.3,507.8 754.1,604.7" fill="#18b0a8" stroke="#18b0a8" stroke-width=".6"/><polygon points="766.4,511.1 782.2,483.3 786.1,480.1 770.3,507.8" fill="#18b0a8" stroke="#18b0a8" stroke-width=".6"/><polygon points="782.2,483.3 798.1,474.7 802.0,471.5 786.1,480.1" fill="#18b0a8" stroke="#18b0a8" stroke-width=".6"/><polygon points="798.1,474.7 813.9,478.5 817.7,475.2 802.0,471.5" fill="#18b0a8" stroke="#18b0a8" stroke-width=".6"/><polygon points="813.9,478.5 831.4,456.8 835.2,453.6 817.7,475.2" fill="#18b0a8" stroke="#18b0a8" stroke-width=".6"/><polygon points="820.3,640.9 823.7,636.9 835.2,453.6 831.4,456.8" fill="#18b0a8" stroke="#18b0a8" stroke-width=".6"/><polygon points="660.2,589.7 657.7,532.6 671.6,567.2 684.7,584.5 696.2,529.5 710.3,582.4 723.4,544.3 736.8,614.2 750.4,608.4 766.4,511.1 782.2,483.3 798.1,474.7 813.9,478.5 831.4,456.8 820.3,640.9" fill="#00e8e8" stroke="#00e8e8" stroke-width=".5"/></g>
<g><polygon points="648.0,517.6 664.1,594.0 668.2,590.5 652.4,514.5" fill="#c000c0" stroke="#c000c0" stroke-width=".6"/><polygon points="664.1,594.0 674.8,539.5 679.0,536.2 668.2,590.5" fill="#c000c0" stroke="#c000c0" stroke-width=".6"/><polygon points="674.8,539.5 686.4,479.7 690.8,476.7 679.0,536.2" fill="#c000c0" stroke="#c000c0" stroke-width=".6"/><polygon points="686.4,479.7 702.3,589.4 706.3,585.9 690.8,476.7" fill="#c000c0" stroke="#c000c0" stroke-width=".6"/><polygon points="702.3,589.4 714.4,458.9 718.7,455.9 706.3,585.9" fill="#c000c0" stroke="#c000c0" stroke-width=".6"/><polygon points="714.4,458.9 729.2,621.6 733.0,617.9 718.7,455.9" fill="#c000c0" stroke="#c000c0" stroke-width=".6"/><polygon points="729.2,621.6 742.8,609.0 746.7,605.3 733.0,617.9" fill="#c000c0" stroke="#c000c0" stroke-width=".6"/><polygon points="742.8,609.0 757.0,595.9 760.9,592.2 746.7,605.3" fill="#c000c0" stroke="#c000c0" stroke-width=".6"/><polygon points="757.0,595.9 771.8,582.3 775.6,578.6 760.9,592.2" fill="#c000c0" stroke="#c000c0" stroke-width=".6"/><polygon points="771.8,582.3 787.8,549.2 791.6,545.6 775.6,578.6" fill="#c000c0" stroke="#c000c0" stroke-width=".6"/><polygon points="787.8,549.2 805.0,509.9 808.9,506.4 791.6,545.6" fill="#c000c0" stroke="#c000c0" stroke-width=".6"/><polygon points="805.0,509.9 823.8,463.3 827.6,460.0 808.9,506.4" fill="#c000c0" stroke="#c000c0" stroke-width=".6"/><polygon points="813.4,649.0 816.9,644.9 827.6,460.0 823.8,463.3" fill="#c000c0" stroke="#c000c0" stroke-width=".6"/><polygon points="652.0,596.6 648.0,517.6 664.1,594.0 674.8,539.5 686.4,479.7 702.3,589.4 714.4,458.9 729.2,621.6 742.8,609.0 757.0,595.9 771.8,582.3 787.8,549.2 805.0,509.9 823.8,463.3 813.4,649.0" fill="#f800f8" stroke="#f800f8" stroke-width=".5"/></g>
<g><polygon points="633.7,427.7 649.9,478.8 654.5,475.8 638.5,424.9" fill="#c0b010" stroke="#c0b010" stroke-width=".6"/><polygon points="649.9,478.8 666.2,549.8 670.6,546.4 654.5,475.8" fill="#c0b010" stroke="#c0b010" stroke-width=".6"/><polygon points="666.2,549.8 681.3,606.1 685.4,602.5 670.6,546.4" fill="#c0b010" stroke="#c0b010" stroke-width=".6"/><polygon points="681.3,606.1 694.2,600.1 698.3,596.5 685.4,602.5" fill="#c0b010" stroke="#c0b010" stroke-width=".6"/><polygon points="694.2,600.1 705.5,461.0 710.0,457.9 698.3,596.5" fill="#c0b010" stroke="#c0b010" stroke-width=".6"/><polygon points="705.5,461.0 721.3,629.3 725.3,625.5 710.0,457.9" fill="#c0b010" stroke="#c0b010" stroke-width=".6"/><polygon points="721.3,629.3 735.0,616.7 739.0,612.8 725.3,625.5" fill="#c0b010" stroke="#c0b010" stroke-width=".6"/><polygon points="735.0,616.7 749.7,563.3 753.8,559.6 739.0,612.8" fill="#c0b010" stroke="#c0b010" stroke-width=".6"/><polygon points="749.7,563.3 765.2,536.8 769.2,533.2 753.8,559.6" fill="#c0b010" stroke="#c0b010" stroke-width=".6"/><polygon points="765.2,536.8 781.3,516.9 785.3,513.4 769.2,533.2" fill="#c0b010" stroke="#c0b010" stroke-width=".6"/><polygon points="781.3,516.9 797.0,521.0 801.0,517.4 785.3,513.4" fill="#c0b010" stroke="#c0b010" stroke-width=".6"/><polygon points="797.0,521.0 813.5,517.0 817.4,513.4 801.0,517.4" fill="#c0b010" stroke="#c0b010" stroke-width=".6"/><polygon points="806.3,657.4 809.9,653.2 817.4,513.4 813.5,517.0" fill="#c0b010" stroke="#c0b010" stroke-width=".6"/><polygon points="643.5,603.6 633.7,427.7 649.9,478.8 666.2,549.8 681.3,606.1 694.2,600.1 705.5,461.0 721.3,629.3 735.0,616.7 749.7,563.3 765.2,536.8 781.3,516.9 797.0,521.0 813.5,517.0 806.3,657.4" fill="#f4f000" stroke="#f4f000" stroke-width=".5"/></g>
<g><polygon points="626.4,473.6 642.5,523.3 647.1,520.0 631.2,470.6" fill="#0000a4" stroke="#0000a4" stroke-width=".6"/><polygon points="642.5,523.3 657.4,556.7 661.8,553.2 647.1,520.0" fill="#0000a4" stroke="#0000a4" stroke-width=".6"/><polygon points="657.4,556.7 670.3,546.0 674.8,542.6 661.8,553.2" fill="#0000a4" stroke="#0000a4" stroke-width=".6"/><polygon points="670.3,546.0 686.3,628.1 690.5,624.3 674.8,542.6" fill="#0000a4" stroke="#0000a4" stroke-width=".6"/><polygon points="686.3,628.1 696.6,475.5 701.1,472.3 690.5,624.3" fill="#0000a4" stroke="#0000a4" stroke-width=".6"/><polygon points="696.6,475.5 713.2,637.1 717.3,633.2 701.1,472.3" fill="#0000a4" stroke="#0000a4" stroke-width=".6"/><polygon points="713.2,637.1 727.0,634.9 731.0,630.9 717.3,633.2" fill="#0000a4" stroke="#0000a4" stroke-width=".6"/><polygon points="727.0,634.9 741.4,582.0 745.6,578.2 731.0,630.9" fill="#0000a4" stroke="#0000a4" stroke-width=".6"/><polygon points="741.4,582.0 756.9,548.0 761.0,544.3 745.6,578.2" fill="#0000a4" stroke="#0000a4" stroke-width=".6"/><polygon points="756.9,548.0 772.5,544.4 776.6,540.7 761.0,544.3" fill="#0000a4" stroke="#0000a4" stroke-width=".6"/><polygon points="772.5,544.4 788.6,540.6 792.6,536.9 776.6,540.7" fill="#0000a4" stroke="#0000a4" stroke-width=".6"/><polygon points="788.6,540.6 806.8,498.7 810.9,495.2 792.6,536.9" fill="#0000a4" stroke="#0000a4" stroke-width=".6"/><polygon points="799.0,666.0 802.7,661.6 810.9,495.2 806.8,498.7" fill="#0000a4" stroke="#0000a4" stroke-width=".6"/><polygon points="634.8,610.8 626.4,473.6 642.5,523.3 657.4,556.7 670.3,546.0 686.3,628.1 696.6,475.5 713.2,637.1 727.0,634.9 741.4,582.0 756.9,548.0 772.5,544.4 788.6,540.6 806.8,498.7 799.0,666.0" fill="#0000e6" stroke="#0000e6" stroke-width=".5"/></g>
<g><polygon points="625.7,614.8 632.0,510.9 636.8,507.6 630.2,611.1" fill="#00a000" stroke="#00a000" stroke-width=".6"/><polygon points="632.0,510.9 650.8,613.3 655.2,609.6 636.8,507.6" fill="#00a000" stroke="#00a000" stroke-width=".6"/><polygon points="650.8,613.3 661.9,567.9 666.4,564.3 655.2,609.6" fill="#00a000" stroke="#00a000" stroke-width=".6"/><polygon points="661.9,567.9 674.4,534.4 679.0,530.9 666.4,564.3" fill="#00a000" stroke="#00a000" stroke-width=".6"/><polygon points="674.4,534.4 689.5,569.0 693.9,565.3 679.0,530.9" fill="#00a000" stroke="#00a000" stroke-width=".6"/><polygon points="689.5,569.0 705.0,645.2 709.1,641.1 693.9,565.3" fill="#00a000" stroke="#00a000" stroke-width=".6"/><polygon points="705.0,645.2 718.7,632.5 722.9,628.5 709.1,641.1" fill="#00a000" stroke="#00a000" stroke-width=".6"/><polygon points="718.7,632.5 733.0,630.1 737.1,626.1 722.9,628.5" fill="#00a000" stroke="#00a000" stroke-width=".6"/><polygon points="733.0,630.1 748.1,586.8 752.3,582.8 737.1,626.1" fill="#00a000" stroke="#00a000" stroke-width=".6"/><polygon points="748.1,586.8 763.6,579.8 767.7,575.8 752.3,582.8" fill="#00a000" stroke="#00a000" stroke-width=".6"/><polygon points="763.6,579.8 779.7,568.6 783.8,564.6 767.7,575.8" fill="#00a000" stroke="#00a000" stroke-width=".6"/><polygon points="779.7,568.6 798.0,519.1 802.2,515.3 783.8,564.6" fill="#00a000" stroke="#00a000" stroke-width=".6"/><polygon points="791.5,674.8 795.3,670.4 802.2,515.3 798.0,519.1" fill="#00a000" stroke="#00a000" stroke-width=".6"/><polygon points="626.0,618.2 625.7,614.8 632.0,510.9 650.8,613.3 661.9,567.9 674.4,534.4 689.5,569.0 705.0,645.2 718.7,632.5 733.0,630.1 748.1,586.8 763.6,579.8 779.7,568.6 798.0,519.1 791.5,674.8" fill="#00e400" stroke="#00e400" stroke-width=".5"/></g>
<g><polygon points="614.8,598.3 628.3,609.6 632.9,605.8 619.5,594.6" fill="#a00a0a" stroke="#a00a0a" stroke-width=".6"/><polygon points="628.3,609.6 636.3,525.5 641.2,522.1 632.9,605.8" fill="#a00a0a" stroke="#a00a0a" stroke-width=".6"/><polygon points="636.3,525.5 654.1,604.4 658.6,600.6 641.2,522.1" fill="#a00a0a" stroke="#a00a0a" stroke-width=".6"/><polygon points="654.1,604.4 663.6,505.6 668.4,502.1 658.6,600.6" fill="#a00a0a" stroke="#a00a0a" stroke-width=".6"/><polygon points="663.6,505.6 678.7,521.8 683.5,518.3 668.4,502.1" fill="#a00a0a" stroke="#a00a0a" stroke-width=".6"/><polygon points="678.7,521.8 696.5,653.5 700.8,649.3 683.5,518.3" fill="#a00a0a" stroke="#a00a0a" stroke-width=".6"/><polygon points="696.5,653.5 710.2,637.2 714.5,633.1 700.8,649.3" fill="#a00a0a" stroke="#a00a0a" stroke-width=".6"/><polygon points="710.2,637.2 724.5,605.3 728.8,601.3 714.5,633.1" fill="#a00a0a" stroke="#a00a0a" stroke-width=".6"/><polygon points="724.5,605.3 739.6,590.9 743.9,586.9 728.8,601.3" fill="#a00a0a" stroke="#a00a0a" stroke-width=".6"/><polygon points="739.6,590.9 755.1,591.8 759.3,587.7 743.9,586.9" fill="#a00a0a" stroke="#a00a0a" stroke-width=".6"/><polygon points="755.1,591.8 771.7,564.4 775.9,560.4 759.3,587.7" fill="#a00a0a" stroke="#a00a0a" stroke-width=".6"/><polygon points="771.7,564.4 788.8,548.2 793.0,544.2 775.9,560.4" fill="#a00a0a" stroke="#a00a0a" stroke-width=".6"/><polygon points="783.8,683.9 787.7,679.3 793.0,544.2 788.8,548.2" fill="#a00a0a" stroke="#a00a0a" stroke-width=".6"/><polygon points="616.9,625.7 614.8,598.3 628.3,609.6 636.3,525.5 654.1,604.4 663.6,505.6 678.7,521.8 696.5,653.5 710.2,637.2 724.5,605.3 739.6,590.9 755.1,591.8 771.7,564.4 788.8,548.2 783.8,683.9" fill="#e00000" stroke="#e00000" stroke-width=".5"/></g>
<polygon points="608.0,625.6 620.7,630.0 621.7,643.9 609.1,639.4" fill="#eaeaea" stroke="#222" stroke-width="1"/>
<polygon points="620.7,630.0 633.6,634.5 634.5,648.5 621.7,643.9" fill="#eaeaea" stroke="#222" stroke-width="1"/>
<polygon points="633.6,634.5 646.7,639.1 647.5,653.1 634.5,648.5" fill="#eaeaea" stroke="#222" stroke-width="1"/>
<polygon points="646.7,639.1 660.0,643.8 660.7,657.9 647.5,653.1" fill="#eaeaea" stroke="#222" stroke-width="1"/>
<polygon points="660.0,643.8 673.5,648.5 674.1,662.6 660.7,657.9" fill="#eaeaea" stroke="#222" stroke-width="1"/>
<polygon points="673.5,648.5 687.2,653.3 687.6,667.5 674.1,662.6" fill="#eaeaea" stroke="#222" stroke-width="1"/>
<polygon points="687.2,653.3 701.1,658.2 701.4,672.4 687.6,667.5" fill="#eaeaea" stroke="#222" stroke-width="1"/>
<polygon points="701.1,658.2 715.3,663.1 715.4,677.4 701.4,672.4" fill="#eaeaea" stroke="#222" stroke-width="1"/>
<polygon points="715.3,663.1 729.6,668.1 729.6,682.5 715.4,677.4" fill="#eaeaea" stroke="#222" stroke-width="1"/>
<polygon points="729.6,668.1 744.2,673.2 744.1,687.7 729.6,682.5" fill="#eaeaea" stroke="#222" stroke-width="1"/>
<polygon points="744.2,673.2 759.0,678.4 758.7,692.9 744.1,687.7" fill="#eaeaea" stroke="#222" stroke-width="1"/>
<polygon points="759.0,678.4 774.0,683.7 773.6,698.3 758.7,692.9" fill="#eaeaea" stroke="#222" stroke-width="1"/>
<polygon points="774.0,683.7 789.3,689.0 788.7,703.7 773.6,698.3" fill="#eaeaea" stroke="#222" stroke-width="1"/>
<polygon points="789.3,689.0 797.0,679.8 796.4,694.4 788.7,703.7" fill="#a9a9a9" stroke="#222" stroke-width="1"/>
<polygon points="797.0,679.8 804.5,670.9 803.8,685.3 796.4,694.4" fill="#a9a9a9" stroke="#222" stroke-width="1"/>
<polygon points="804.5,670.9 811.8,662.2 811.0,676.5 803.8,685.3" fill="#a9a9a9" stroke="#222" stroke-width="1"/>
<polygon points="811.8,662.2 818.9,653.7 818.0,667.9 811.0,676.5" fill="#a9a9a9" stroke="#222" stroke-width="1"/>
<polygon points="818.9,653.7 825.8,645.4 824.9,659.5 818.0,667.9" fill="#a9a9a9" stroke="#222" stroke-width="1"/>
<polygon points="825.8,645.4 832.5,637.3 831.6,651.3 824.9,659.5" fill="#a9a9a9" stroke="#222" stroke-width="1"/>
<polygon points="832.5,637.3 839.1,629.5 838.1,643.4 831.6,651.3" fill="#a9a9a9" stroke="#222" stroke-width="1"/>
<polygon points="839.1,629.5 845.5,621.8 844.5,635.6 838.1,643.4" fill="#a9a9a9" stroke="#222" stroke-width="1"/>
<polygon points="845.5,621.8 851.8,614.3 850.7,628.0 844.5,635.6" fill="#a9a9a9" stroke="#222" stroke-width="1"/>
<path d="M609.1,639.4 l-2.5,2.2 M621.7,643.9 l-2.5,2.2 M634.5,648.5 l-2.5,2.2 M647.5,653.1 l-2.5,2.2 M660.7,657.9 l-2.5,2.2 M674.1,662.6 l-2.5,2.2 M687.6,667.5 l-2.5,2.2 M701.4,672.4 l-2.5,2.2 M715.4,677.4 l-2.5,2.2 M729.6,682.5 l-2.5,2.2 M744.1,687.7 l-2.5,2.2 M758.7,692.9 l-2.5,2.2 M773.6,698.3 l-2.5,2.2 M788.7,703.7 l-2.5,2.2 M788.7,703.7 l4,1.5 M796.4,694.4 l4,1.5 M803.8,685.3 l4,1.5 M811.0,676.5 l4,1.5 M818.0,667.9 l4,1.5 M824.9,659.5 l4,1.5 M831.6,651.3 l4,1.5 M838.1,643.4 l4,1.5 M844.5,635.6 l4,1.5 M850.7,628.0 l4,1.5" fill="none" stroke="#111" stroke-width="1"/>
<text transform="translate(860.3 620.8) rotate(8)" font-family="Liberation Sans, sans-serif" font-size="11" font-weight="bold" fill="#0a0a0a">0</text>
<text transform="translate(863.0 586.8) rotate(8)" font-family="Liberation Sans, sans-serif" font-size="11" font-weight="bold" fill="#0a0a0a">10</text>
<text transform="translate(865.8 551.2) rotate(8)" font-family="Liberation Sans, sans-serif" font-size="11" font-weight="bold" fill="#0a0a0a">20</text>
<text transform="translate(868.8 514.0) rotate(8)" font-family="Liberation Sans, sans-serif" font-size="11" font-weight="bold" fill="#0a0a0a">30</text>
<text transform="translate(871.9 475.0) rotate(8)" font-family="Liberation Sans, sans-serif" font-size="11" font-weight="bold" fill="#0a0a0a">40</text>
<text transform="translate(875.2 434.0) rotate(8)" font-family="Liberation Sans, sans-serif" font-size="11" font-weight="bold" fill="#0a0a0a">50</text>
<text transform="translate(603.5 631.1) rotate(-28)" text-anchor="end" font-family="Liberation Sans, sans-serif" font-size="9" font-weight="bold" font-style="italic" fill="#0a0a0a">0</text>
<text transform="translate(600.8 596.7) rotate(-28)" text-anchor="end" font-family="Liberation Sans, sans-serif" font-size="9" font-weight="bold" font-style="italic" fill="#0a0a0a">10</text>
<text transform="translate(597.9 560.7) rotate(-28)" text-anchor="end" font-family="Liberation Sans, sans-serif" font-size="9" font-weight="bold" font-style="italic" fill="#0a0a0a">20</text>
<text transform="translate(594.9 523.0) rotate(-28)" text-anchor="end" font-family="Liberation Sans, sans-serif" font-size="9" font-weight="bold" font-style="italic" fill="#0a0a0a">30</text>
<text transform="translate(591.7 483.5) rotate(-28)" text-anchor="end" font-family="Liberation Sans, sans-serif" font-size="9" font-weight="bold" font-style="italic" fill="#0a0a0a">40</text>
<text transform="translate(588.4 442.0) rotate(-28)" text-anchor="end" font-family="Liberation Sans, sans-serif" font-size="9" font-weight="bold" font-style="italic" fill="#0a0a0a">50</text>
<text x="982" y="394" text-anchor="end" font-family="Liberation Sans, sans-serif" font-size="16" fill="#f6dc9a" stroke="#f6dc9a" stroke-width=".35" textLength="129" lengthAdjust="spacingAndGlyphs">Lottery Numbers</text>
<text transform="translate(588.500 637) rotate(-94.700)" font-family="Liberation Sans, sans-serif" font-size="14.500" fill="#ff1818" stroke="#ff1818" stroke-width=".3" textLength="178" lengthAdjust="spacingAndGlyphs">Percentage Deviation</text>
<text transform="translate(635 667.500) rotate(21.500)" font-family="Liberation Sans, sans-serif" font-size="11.500" font-style="italic" fill="#fff" stroke="#fff" stroke-width=".45" textLength="101" lengthAdjust="spacingAndGlyphs">Row Numbers</text>
<rect x="459.500" y="412.0" width="19" height="20" fill="#ff0000"/>
<text x="487.300" y="426.8" font-family="Liberation Sans, sans-serif" font-size="16" font-weight="bold" fill="#ffffc4">Serie</text>
<rect x="459.500" y="458.3" width="19" height="20" fill="#00ff00"/>
<text x="487.300" y="473.1" font-family="Liberation Sans, sans-serif" font-size="16" font-weight="bold" fill="#ffffc4">Serie</text>
<rect x="459.500" y="504.6" width="19" height="20" fill="#0000ff"/>
<text x="487.300" y="519.4" font-family="Liberation Sans, sans-serif" font-size="16" font-weight="bold" fill="#ffffc4">Serie</text>
<rect x="459.500" y="550.9" width="19" height="20" fill="#ffff00"/>
<text x="487.300" y="565.7" font-family="Liberation Sans, sans-serif" font-size="16" font-weight="bold" fill="#ffffc4">Serie</text>
<rect x="459.500" y="597.2" width="19" height="20" fill="#ff00ff"/>
<text x="487.300" y="612.0" font-family="Liberation Sans, sans-serif" font-size="16" font-weight="bold" fill="#ffffc4">Serie</text>
<text x="485" y="739.500" font-family="Liberation Sans, sans-serif" font-size="16.500" font-weight="bold" fill="#f2e2a2" textLength="70.500" lengthAdjust="spacingAndGlyphs">Deviation</text>
</svg>
<div id="misc">
<div class="namebox">D8</div>
<div class="fbar">5.48566070361326</div>
<!-- vertical scrollbar -->
<div class="vsb"><div class="vthumb"></div>
<svg class="abs" style="left:3px;top:6px" width="10" height="6" viewBox="0 0 10 6"><path d="M1.500 5 L5 1.200 L8.500 5 Z" fill="#3a3a3a"/></svg>
<svg class="abs" style="left:3px;top:655px" width="10" height="6" viewBox="0 0 10 6"><path d="M1.500 1 L8.500 1 L5 4.800 Z" fill="#3a3a3a"/></svg>
</div>
<!-- tab bar -->
<div class="tabbar">
<div class="tabnav"></div>
<svg class="abs" style="left:0;top:0" width="400" height="17" viewBox="0 0 400 17">
<path d="M9.500 8.500 L4.500 8.500 M9 4.500 L4.600 8.500 L9 12.500 Z" fill="#6a6a6a"/>
<path d="M23 4.500 L27.400 8.500 L23 12.500 Z" fill="#6a6a6a"/>
<path d="M33 0 L101.500 0 L94.500 16.500 L41 16.500 Z" fill="#fff"/>
<path d="M33.300 0 L41 16.200 L94.500 16.200 L101.500 0" fill="none" stroke="#111" stroke-width="1.100"/>
<path d="M101.500 .5 L400 .5" stroke="#333" stroke-width="1"/>
<text x="47" y="13.300" font-family="Liberation Sans, sans-serif" font-size="13" fill="#111" textLength="38.500" lengthAdjust="spacingAndGlyphs">Sheet1</text>
</svg>
<div class="tabsplit"></div>
</div>
<div class="hsb"><div class="hthumb"></div>
<svg class="abs" style="left:4px;top:4px" width="6" height="10" viewBox="0 0 6 10"><path d="M5.500 1 L1 5 L5.500 9 Z" fill="#333"/></svg>
<svg class="abs" style="left:252px;top:4px" width="6" height="10" viewBox="0 0 6 10"><path d="M.5 1 L5 5 L.5 9 Z" fill="#333"/></svg>
</div>
<div class="sbcorner"></div>
<!-- status bar -->
<div class="status">
<span class="st w" style="left:2px">Merge and Center Across Cells</span>
<i style="left:318px"></i>
<span class="st" style="left:323px">Active Selection: D8:E10</span>
<i style="left:469px"></i>
<span class="st" style="left:475px">Modified</span>
<i style="left:581px"></i>
<span class="st" style="left:586px">Zoom Factor: 100%</span>
<i style="left:733px"></i>
<span class="st" style="left:739px">NUM</span>
<i style="left:783px"></i><i style="left:834px"></i><i style="left:884px"></i>
<span class="st" style="left:889px">INSERT</span>
<i style="left:955px"></i>
<svg class="abs" style="left:990px;top:6px" width="12" height="12" viewBox="0 0 12 12"><g fill="#b8b8b8"><rect x="9" y="1" width="2" height="2"/><rect x="9" y="5" width="2" height="2"/><rect x="9" y="9" width="2" height="2"/><rect x="5" y="5" width="2" height="2"/><rect x="5" y="9" width="2" height="2"/><rect x="1" y="9" width="2" height="2"/></g></svg>
</div>
<!-- watermark -->
<div class="wm"><span class="w1">SOFT-</span><span class="w2">OK</span><span class="w3">.NET</span></div>
</div>
</body></html>
